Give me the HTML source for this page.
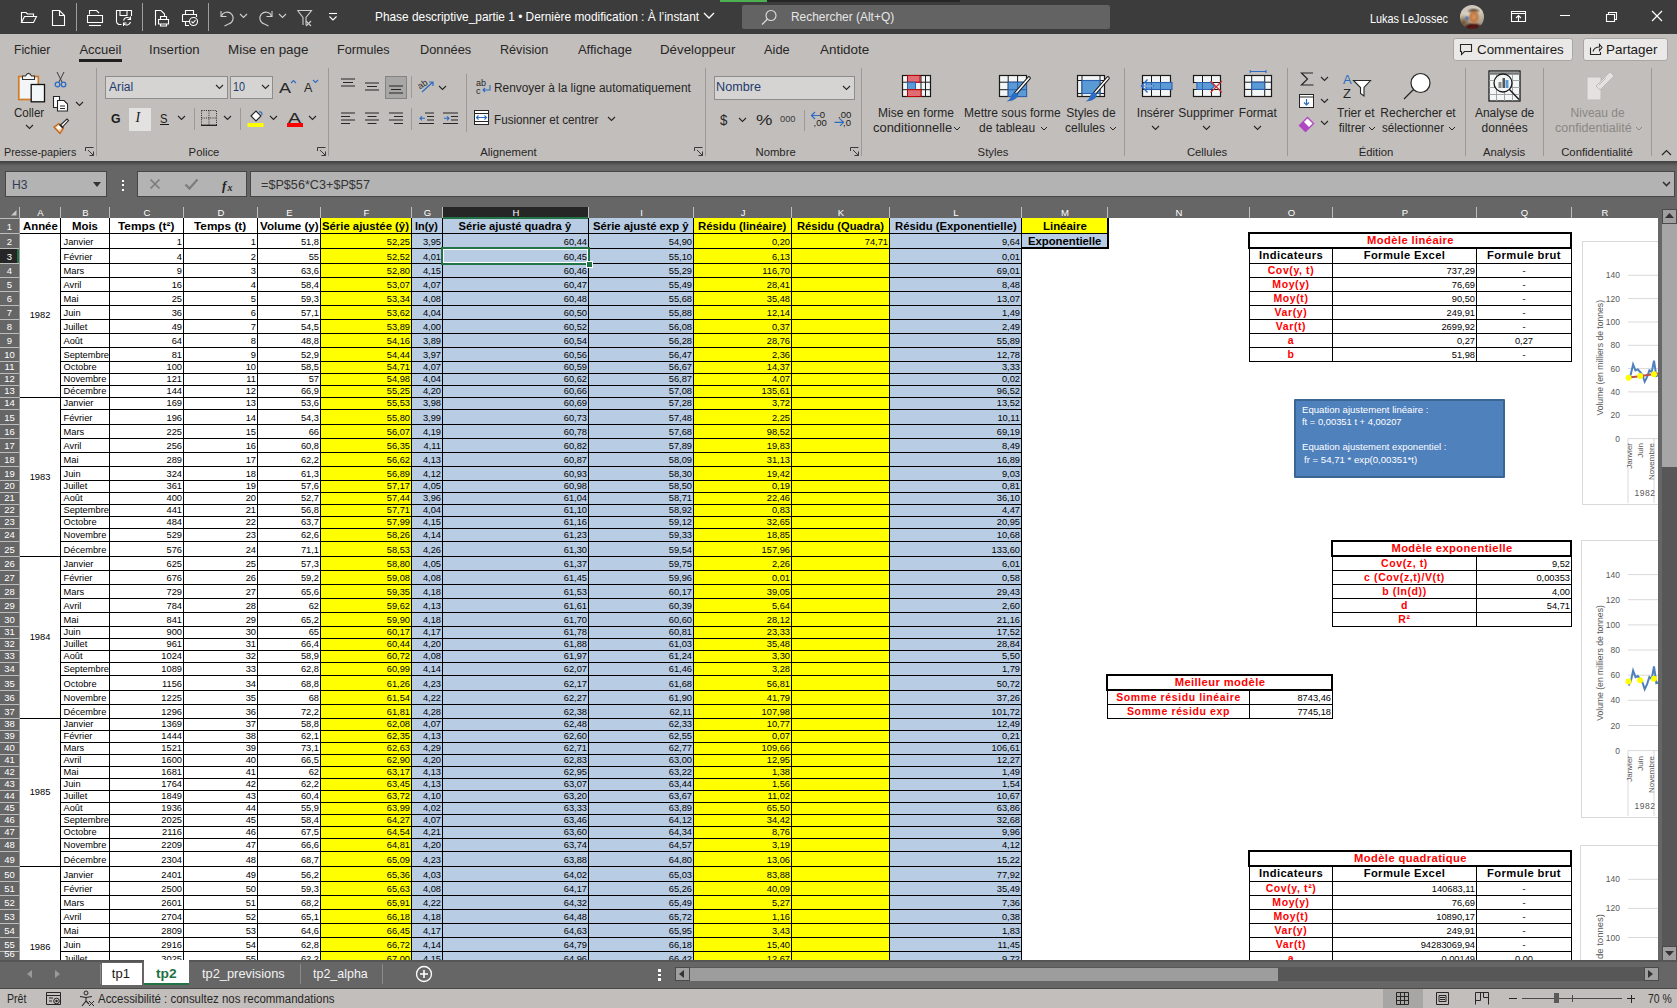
<!DOCTYPE html><html><head><meta charset="utf-8"><style>*{margin:0;padding:0}
body{width:1677px;height:1008px;overflow:hidden;position:relative;background:#c2bebb;font-family:"Liberation Sans",sans-serif}
body div,body svg{position:absolute}
.t{white-space:nowrap}
.c{height:12px;line-height:12px;font-size:9.3px;white-space:nowrap;color:#000}
.c.r{text-align:right;box-sizing:border-box;padding-right:1px}
.c.l{text-align:left;box-sizing:border-box;padding-left:2.5px}
.h{height:15px;line-height:15px;font-size:11.2px;font-weight:bold;text-align:center;white-space:nowrap;letter-spacing:0.4px}
.ch{top:207px;height:11px;line-height:12px;font-size:9.5px;color:#fff;text-align:center}
.rh{left:0;width:19px;height:12px;line-height:12px;font-size:9.5px;color:#fff;text-align:center}
</style></head><body>
<div style="left:0px;top:0px;width:1677px;height:34px;background:#3c3c3c;"></div>
<div style="left:720px;top:0px;width:47px;height:2px;background:#4caf50;"></div>
<div style="left:767px;top:0px;width:193px;height:2px;background:#262626;"></div>
<svg style="left:20px;top:9px;" width="18" height="16" viewBox="0 0 18 16"><path fill="none" stroke="#fff" stroke-width="1.1" d="M1.5 13.5V3.5H6L7.5 5H13.5V7.5"/><path fill="none" stroke="#fff" stroke-width="1.1" d="M1.5 13.5L4.5 7.5H16.5L13.5 13.5Z"/></svg>
<svg style="left:51px;top:9px;" width="15" height="18" viewBox="0 0 15 18"><path fill="none" stroke="#fff" stroke-width="1.1" d="M1.5 1.5H8.5L13.5 6.5V16.5H1.5Z"/><path fill="none" stroke="#fff" stroke-width="1.1" d="M8.5 1.5V6.5H13.5"/></svg>
<div style="left:76px;top:3px;width:1px;height:28px;background:#9e9e9e;"></div>
<svg style="left:86px;top:9px;" width="18" height="18" viewBox="0 0 18 18"><path fill="none" stroke="#fff" stroke-width="1.1" d="M3.5 5.5V1.5H10.5L13 4"/><path fill="none" stroke="#fff" stroke-width="1.1" d="M1.5 6.5H16.5V13.5H1.5Z"/><path fill="none" stroke="#fff" stroke-width="1.1" d="M3 16.5H15"/></svg>
<svg style="left:115px;top:9px;" width="18" height="18" viewBox="0 0 18 18"><path fill="none" stroke="#fff" stroke-width="1.1" d="M1.5 13.5V1.5H16.5V7"/><path fill="none" stroke="#fff" stroke-width="1.1" d="M1.5 13.5L3.5 15.5H6.5"/><path fill="none" stroke="#fff" stroke-width="1.1" d="M5 1.5V6.5H12V1.5"/><path fill="none" stroke="#fff" stroke-width="1.1" d="M8.5 11.5A4 4 0 0 1 15.5 10M15.5 13A4 4 0 0 1 8.5 14.5M15.5 7.5V10.5H12.5M8.5 17V14H11.5"/></svg>
<div style="left:142px;top:3px;width:1px;height:28px;background:#9e9e9e;"></div>
<svg style="left:154px;top:9px;" width="16" height="18" viewBox="0 0 16 18"><path fill="none" stroke="#fff" stroke-width="1.1" d="M1.5 16.5V1.5H7L10.5 5V7"/><path fill="none" stroke="#fff" stroke-width="1.1" d="M4.5 10.5H14.5V15H4.5Z"/><path fill="none" stroke="#fff" stroke-width="1.1" d="M6.5 10.5V7.5H12.5V10.5M6.5 15V17H12.5V15"/></svg>
<svg style="left:181px;top:9px;" width="18" height="18" viewBox="0 0 18 18"><path fill="none" stroke="#fff" stroke-width="1.1" d="M4.5 5.5V1.5H12.5V5.5"/><path fill="none" stroke="#fff" stroke-width="1.1" d="M1.5 5.5H15.5V8M1.5 5.5V12.5H8"/><path fill="none" stroke="#fff" stroke-width="1.1" d="M4.5 12.5V16.5H8"/><circle fill="none" stroke="#fff" stroke-width="1.1" cx="12.5" cy="12.5" r="4"/><path fill="none" stroke="#fff" stroke-width="1.1" d="M10.5 12.5L12 14L14.5 11"/></svg>
<div style="left:208px;top:3px;width:1px;height:28px;background:#9e9e9e;"></div>
<svg style="left:219px;top:9px;" width="16" height="18" viewBox="0 0 16 18"><path fill="none" stroke="#cfcfcf" stroke-width="1.1" d="M2 2V7.5H7.5"/><path fill="none" stroke="#cfcfcf" stroke-width="1.1" d="M2.5 7A6 6 0 1 1 9.5 15L5.5 17"/></svg>
<svg style="left:239px;top:13px;" width="9" height="6" viewBox="0 0 9 6"><path fill="none" stroke="#cfcfcf" stroke-width="1.1" d="M1 1L4.5 4.5L8 1"/></svg>
<svg style="left:258px;top:9px;" width="16" height="18" viewBox="0 0 16 18"><path fill="none" stroke="#cfcfcf" stroke-width="1.1" d="M14 2V7.5H8.5"/><path fill="none" stroke="#cfcfcf" stroke-width="1.1" d="M13.5 7A6 6 0 1 0 6.5 15L10.5 17"/></svg>
<svg style="left:278px;top:13px;" width="9" height="6" viewBox="0 0 9 6"><path fill="none" stroke="#cfcfcf" stroke-width="1.1" d="M1 1L4.5 4.5L8 1"/></svg>
<svg style="left:296px;top:9px;" width="18" height="18" viewBox="0 0 18 18"><path fill="none" stroke="#cfcfcf" stroke-width="1.1" d="M1.5 1.5H15.5L10 8.5V16"/><path fill="none" stroke="#cfcfcf" stroke-width="1.1" d="M1.5 1.5L7 8.5V16"/><path fill="none" stroke="#cfcfcf" stroke-width="1.1" d="M10 12L15 17M15 12L10 17"/></svg>
<svg style="left:328px;top:12px;" width="10" height="10" viewBox="0 0 10 10"><path fill="none" stroke="#fff" stroke-width="1.1" d="M1 1.5H9"/><path fill="none" stroke="#fff" stroke-width="1.1" d="M1.5 4.5L5 8L8.5 4.5"/></svg>
<div class="t" style="left:375.1px;top:10.3px;font-size:13px;line-height:13px;color:#ffffff;transform:scaleX(0.913);transform-origin:0 0;">Phase descriptive_partie 1 • Dernière modification : À l’instant</div>
<svg style="left:703px;top:12px;" width="12" height="8" viewBox="0 0 12 8"><path fill="none" stroke="#fff" stroke-width="1.3" d="M1 1L6 6L11 1"/></svg>
<div style="left:742px;top:5px;width:368px;height:24px;background:#636363;border-radius:2px"></div>
<svg style="left:760px;top:9px;" width="18" height="17" viewBox="0 0 18 17"><circle cx="11" cy="6.5" r="5" fill="none" stroke="#e0e0e0" stroke-width="1.1"/><path d="M7.5 10L2 15.5" stroke="#e0e0e0" stroke-width="1.2"/></svg>
<div class="t" style="left:791.0px;top:10.9px;font-size:12.5px;line-height:12.5px;color:#e6e6e6;transform:scaleX(0.955);transform-origin:0 0;">Rechercher (Alt+Q)</div>
<div class="t" style="left:1370.2px;top:11.5px;font-size:13px;line-height:13px;color:#ffffff;transform:scaleX(0.836);transform-origin:0 0;">Lukas LeJossec</div>
<div style="left:1460px;top:5px;width:24px;height:24px;border-radius:50%;overflow:hidden;background:radial-gradient(ellipse 6px 8px at 58% 50%,#d99560 0,#c07a45 55%,rgba(176,106,58,0) 100%),radial-gradient(ellipse 7px 3px at 57% 24%,#3a2a1a 0,rgba(58,42,26,0) 100%),radial-gradient(ellipse 11px 7px at 55% 100%,#5e1c18 0,#4a1614 60%,rgba(74,22,20,0) 100%),radial-gradient(circle 3px at 30% 55%,#3a70c0 0,rgba(58,112,192,0) 100%),radial-gradient(ellipse 8px 9px at 15% 75%,#6a5030 0,rgba(106,80,48,0) 100%),linear-gradient(160deg,#c8c0b8 0,#d8d0c0 40%,#8a7a68 100%)"></div>
<svg style="left:1510px;top:10px;" width="17" height="13" viewBox="0 0 17 13"><path fill="none" stroke="#fff" stroke-width="1.1" d="M1.5 1.5H15.5V11.5H1.5ZM1.5 3.5H15.5M8.5 11V5.5M6 8L8.5 5.5L11 8"/></svg>
<div style="left:1560px;top:15px;width:10px;height:1.2px;background:#fff;"></div>
<svg style="left:1604px;top:10px;" width="14" height="13" viewBox="0 0 14 13"><path fill="none" stroke="#fff" stroke-width="1.1" d="M2.5 4.5H10.5V11.5H2.5ZM4.5 4.5V2.5H12.5V9.5H10.5"/></svg>
<svg style="left:1650px;top:9px;" width="14" height="14" viewBox="0 0 14 14"><path fill="none" stroke="#fff" stroke-width="1.2" d="M2 2L12 12M12 2L2 12"/></svg>
<div style="left:0px;top:34px;width:1677px;height:127px;background:#c2bebb;"></div>
<div class="t" style="left:13.5px;top:43.3px;font-size:13px;line-height:13px;color:#262626;transform:scaleX(0.933);transform-origin:0 0;">Fichier</div>
<div class="t" style="left:79.4px;top:43.3px;font-size:13px;line-height:13px;color:#262626;">Accueil</div>
<div class="t" style="left:149.3px;top:43.3px;font-size:13px;line-height:13px;color:#262626;transform:scaleX(1.016);transform-origin:0 0;">Insertion</div>
<div class="t" style="left:228.3px;top:43.3px;font-size:13px;line-height:13px;color:#262626;transform:scaleX(1.031);transform-origin:0 0;">Mise en page</div>
<div class="t" style="left:337.2px;top:43.3px;font-size:13px;line-height:13px;color:#262626;transform:scaleX(0.971);transform-origin:0 0;">Formules</div>
<div class="t" style="left:419.7px;top:43.3px;font-size:13px;line-height:13px;color:#262626;transform:scaleX(0.984);transform-origin:0 0;">Données</div>
<div class="t" style="left:500.3px;top:43.3px;font-size:13px;line-height:13px;color:#262626;transform:scaleX(0.969);transform-origin:0 0;">Révision</div>
<div class="t" style="left:577.9px;top:43.3px;font-size:13px;line-height:13px;color:#262626;">Affichage</div>
<div class="t" style="left:659.8px;top:43.3px;font-size:13px;line-height:13px;color:#262626;transform:scaleX(1.023);transform-origin:0 0;">Développeur</div>
<div class="t" style="left:763.6px;top:43.3px;font-size:13px;line-height:13px;color:#262626;transform:scaleX(0.985);transform-origin:0 0;">Aide</div>
<div class="t" style="left:819.8px;top:43.3px;font-size:13px;line-height:13px;color:#262626;transform:scaleX(1.032);transform-origin:0 0;">Antidote</div>
<div style="left:79px;top:59px;width:43px;height:3px;background:#1f1f1f;"></div>
<div style="left:1453px;top:38px;width:118px;height:21px;background:#ebe9e7;border:1px solid #a9a7a5;border-radius:3px"></div>
<svg style="left:1459px;top:43px;" width="14" height="13" viewBox="0 0 14 13"><path fill="none" stroke="#262626" stroke-width="1.1" d="M1.5 1.5H12.5V8.5H5.5L2.5 11.5V8.5H1.5Z"/></svg>
<div class="t" style="left:1476.5px;top:43.0px;font-size:13px;line-height:13px;color:#1a1a1a;transform:scaleX(1.026);transform-origin:0 0;">Commentaires</div>
<div style="left:1583px;top:38px;width:83px;height:21px;background:#ebe9e7;border:1px solid #a9a7a5;border-radius:3px"></div>
<svg style="left:1589px;top:42px;" width="14" height="14" viewBox="0 0 14 14"><path fill="none" stroke="#262626" stroke-width="1.1" d="M1.5 5.5V12.5H11.5V10M4 9.5C5 6 8 5 10.5 5V2.5L13 5.5L10.5 8.5V6.5"/></svg>
<div class="t" style="left:1605.5px;top:43.0px;font-size:13px;line-height:13px;color:#1a1a1a;transform:scaleX(1.032);transform-origin:0 0;">Partager</div>
<div style="left:96px;top:68px;width:1px;height:88px;background:#9b9896;"></div>
<div style="left:328px;top:68px;width:1px;height:88px;background:#9b9896;"></div>
<div style="left:705px;top:68px;width:1px;height:88px;background:#9b9896;"></div>
<div style="left:861px;top:68px;width:1px;height:88px;background:#9b9896;"></div>
<div style="left:1124px;top:68px;width:1px;height:88px;background:#9b9896;"></div>
<div style="left:1287px;top:68px;width:1px;height:88px;background:#9b9896;"></div>
<div style="left:1465px;top:68px;width:1px;height:88px;background:#9b9896;"></div>
<div style="left:1543px;top:68px;width:1px;height:88px;background:#9b9896;"></div>
<div style="left:1651px;top:68px;width:1px;height:88px;background:#9b9896;"></div>
<div class="t" style="left:3.6px;top:146.6px;font-size:11.3px;line-height:11.3px;color:#262626;transform:scaleX(0.951);transform-origin:0 0;">Presse-papiers</div>
<div class="t" style="left:188.6px;top:146.6px;font-size:11.3px;line-height:11.3px;color:#262626;">Police</div>
<div class="t" style="left:480.2px;top:146.6px;font-size:11.3px;line-height:11.3px;color:#262626;">Alignement</div>
<div class="t" style="left:755.5px;top:146.6px;font-size:11.3px;line-height:11.3px;color:#262626;">Nombre</div>
<div class="t" style="left:977.6px;top:146.6px;font-size:11.3px;line-height:11.3px;color:#262626;">Styles</div>
<div class="t" style="left:1186.9px;top:146.6px;font-size:11.3px;line-height:11.3px;color:#262626;">Cellules</div>
<div class="t" style="left:1358.7px;top:146.6px;font-size:11.3px;line-height:11.3px;color:#262626;">Édition</div>
<div class="t" style="left:1483.0px;top:146.6px;font-size:11.3px;line-height:11.3px;color:#262626;">Analysis</div>
<div class="t" style="left:1561.2px;top:146.6px;font-size:11.3px;line-height:11.3px;color:#262626;">Confidentialité</div>
<svg style="left:85px;top:147px;" width="9" height="9" viewBox="0 0 9 9"><path fill="none" stroke="#3b3b3b" stroke-width="1" d="M0.5 4V0.5H8.5M8.5 8.5L3 3M8.5 4.5V8.5H4.5"/></svg>
<svg style="left:317px;top:147px;" width="9" height="9" viewBox="0 0 9 9"><path fill="none" stroke="#3b3b3b" stroke-width="1" d="M0.5 4V0.5H8.5M8.5 8.5L3 3M8.5 4.5V8.5H4.5"/></svg>
<svg style="left:694px;top:147px;" width="9" height="9" viewBox="0 0 9 9"><path fill="none" stroke="#3b3b3b" stroke-width="1" d="M0.5 4V0.5H8.5M8.5 8.5L3 3M8.5 4.5V8.5H4.5"/></svg>
<svg style="left:850px;top:147px;" width="9" height="9" viewBox="0 0 9 9"><path fill="none" stroke="#3b3b3b" stroke-width="1" d="M0.5 4V0.5H8.5M8.5 8.5L3 3M8.5 4.5V8.5H4.5"/></svg>
<svg style="left:1661px;top:149px;" width="11" height="7" viewBox="0 0 11 7"><path fill="none" stroke="#262626" stroke-width="1.2" d="M1 6L5.5 1.5L10 6"/></svg>
<svg style="left:16px;top:70px;" width="31" height="33" viewBox="0 0 31 33"><rect x="2.8" y="6.5" width="19.5" height="23" fill="#f3f6f6" stroke="#d07a2a" stroke-width="1.7"/><path d="M6.5 9.5V6H9.5Q12.5 0.8 15.5 6H18.5V9.5Z" fill="#f3f6f6" stroke="#333" stroke-width="1.1"/><rect x="15.2" y="14.5" width="13.3" height="17.3" fill="#f3f6f6" stroke="#111" stroke-width="1.3"/></svg>
<div class="t" style="left:13.6px;top:106.6px;font-size:12px;line-height:12px;color:#262626;transform:scaleX(0.963);transform-origin:0 0;">Coller</div>
<svg style="left:25px;top:124px;" width="9" height="6" viewBox="0 0 9 6"><path fill="none" stroke="#262626" stroke-width="1.1" d="M1 1L4.5 4.5L8 1"/></svg>
<svg style="left:54px;top:71px;" width="13" height="17" viewBox="0 0 13 17"><path fill="none" stroke="#3b3b3b" stroke-width="1" d="M3 1L8 11M10 1L5 11"/><circle cx="3.5" cy="13.5" r="2.3" fill="none" stroke="#2b6cc4" stroke-width="1.3"/><circle cx="9.5" cy="13.5" r="2.3" fill="none" stroke="#2b6cc4" stroke-width="1.3"/></svg>
<svg style="left:52px;top:95px;" width="18" height="17" viewBox="0 0 18 17"><path fill="#fff" stroke="#262626" stroke-width="1.1" d="M1.5 1.5H7.5V12.5H1.5Z"/><path fill="#fff" stroke="#262626" stroke-width="1.1" d="M5.5 5.5H12L15.5 9V16H5.5Z"/><path stroke="#262626" d="M8 11H13M8 13.5H13"/></svg>
<svg style="left:75px;top:101px;" width="9" height="6" viewBox="0 0 9 6"><path fill="none" stroke="#262626" stroke-width="1.1" d="M1 1L4.5 4.5L8 1"/></svg>
<svg style="left:53px;top:118px;" width="17" height="17" viewBox="0 0 17 17"><path d="M1 9L6 5.5L10.5 10L7 15.5Z" fill="#f0c896" stroke="#c4641b" stroke-width="1.3"/><path d="M3 9.5L6.5 7L9 9.5L5.5 12Z" fill="#fff"/><path d="M7.5 7L9.5 9L15.5 2.5L14 1Z" fill="#fff" stroke="#262626" stroke-width="1.1"/><path d="M6.5 6.5L10 10" stroke="#262626" stroke-width="1.5"/></svg>
<div style="left:105px;top:76px;width:121px;height:21px;background:#d6d4d2;border:1px solid #8f8d8b"></div>
<div class="t" style="left:108.5px;top:81.4px;font-size:12.5px;line-height:12.5px;color:#1e3a6e;transform:scaleX(0.970);transform-origin:0 0;">Arial</div>
<svg style="left:215px;top:84px;" width="9" height="6" viewBox="0 0 9 6"><path fill="none" stroke="#262626" stroke-width="1.1" d="M1 1L4.5 4.5L8 1"/></svg>
<div style="left:230px;top:76px;width:41px;height:21px;background:#d6d4d2;border:1px solid #8f8d8b"></div>
<div class="t" style="left:233.0px;top:81.4px;font-size:12.5px;line-height:12.5px;color:#1e3a6e;transform:scaleX(0.860);transform-origin:0 0;">10</div>
<svg style="left:261px;top:84px;" width="9" height="6" viewBox="0 0 9 6"><path fill="none" stroke="#262626" stroke-width="1.1" d="M1 1L4.5 4.5L8 1"/></svg>
<div class="t" style="left:279.0px;top:80.3px;font-size:15px;line-height:15px;color:#262626;transform:scaleX(1.200);transform-origin:0 0;">A</div>
<svg style="left:290px;top:79px;" width="7" height="5" viewBox="0 0 7 5"><path fill="none" stroke="#2b6cc4" stroke-width="1.1" d="M1 4L3.5 1.5L6 4"/></svg>
<div class="t" style="left:304.0px;top:82.4px;font-size:12.5px;line-height:12.5px;color:#262626;">A</div>
<svg style="left:312px;top:79px;" width="7" height="5" viewBox="0 0 7 5"><path fill="none" stroke="#2b6cc4" stroke-width="1.1" d="M1 1L3.5 3.5L6 1"/></svg>
<div class="t" style="left:111.0px;top:111.5px;font-size:13px;line-height:13px;color:#1a1a1a;font-weight:bold;transform:scaleX(0.940);transform-origin:0 0;">G</div>
<div style="left:129px;top:108px;width:22px;height:23px;background:#e4e2e0;"></div>
<div class="t" style="left:135.5px;top:110.6px;font-size:14px;line-height:14px;color:#1a1a1a;font-style:italic;font-family:'Liberation Serif'">I</div>
<div class="t" style="left:160.4px;top:111.5px;font-size:13px;line-height:13px;color:#1a1a1a;transform:scaleX(0.867);transform-origin:0 0;">S</div>
<div style="left:160px;top:124px;width:9px;height:1.2px;background:#1a1a1a;"></div>
<svg style="left:177px;top:115px;" width="9" height="6" viewBox="0 0 9 6"><path fill="none" stroke="#262626" stroke-width="1.1" d="M1 1L4.5 4.5L8 1"/></svg>
<div style="left:194px;top:108px;width:1px;height:22px;background:#9b9896;"></div>
<svg style="left:201px;top:110px;" width="17" height="16" viewBox="0 0 17 16"><path fill="none" stroke="#262626" stroke-width="1" stroke-dasharray="1 1.2" d="M0.5 0.5H15.5V15.5M0.5 0.5V15.5M8 0.5V15.5M0.5 8H15.5"/><path stroke="#1a1a1a" stroke-width="1.3" d="M0 15.3H16"/></svg>
<svg style="left:223px;top:115px;" width="9" height="6" viewBox="0 0 9 6"><path fill="none" stroke="#262626" stroke-width="1.1" d="M1 1L4.5 4.5L8 1"/></svg>
<div style="left:240px;top:108px;width:1px;height:22px;background:#9b9896;"></div>
<svg style="left:247px;top:108px;" width="18" height="21" viewBox="0 0 18 21"><path d="M4 8L9 3L14 8L9 13Z" fill="#fff" stroke="#262626" stroke-width="1.1"/><path d="M12 4Q15 3 15 7" fill="none" stroke="#2b6cc4" stroke-width="1.2"/><rect x="0.5" y="15" width="16" height="4" fill="#ffff00"/></svg>
<svg style="left:269px;top:115px;" width="9" height="6" viewBox="0 0 9 6"><path fill="none" stroke="#262626" stroke-width="1.1" d="M1 1L4.5 4.5L8 1"/></svg>
<div class="t" style="left:288.0px;top:111.1px;font-size:14px;line-height:14px;color:#262626;transform:scaleX(1.400);transform-origin:0 0;">A</div>
<div style="left:287px;top:123px;width:16px;height:4px;background:#ff0000;"></div>
<svg style="left:308px;top:115px;" width="9" height="6" viewBox="0 0 9 6"><path fill="none" stroke="#262626" stroke-width="1.1" d="M1 1L4.5 4.5L8 1"/></svg>
<svg style="left:341px;top:78px;" width="15" height="12" viewBox="0 0 15 12"><path stroke="#262626" stroke-width="1.1" d="M0 1H14M2 4.5H12M0 8H14"/></svg>
<svg style="left:365px;top:82px;" width="15" height="11" viewBox="0 0 15 11"><path stroke="#262626" stroke-width="1.1" d="M0 1H14M2 4.5H12M0 8H14"/></svg>
<div style="left:385px;top:76px;width:20px;height:21px;background:#a9a7a5;border:1px solid #858381"></div>
<svg style="left:389px;top:85px;" width="15" height="11" viewBox="0 0 15 11"><path stroke="#262626" stroke-width="1.1" d="M0 1H14M2 4.5H12M0 8H14"/></svg>
<div style="left:411px;top:76px;width:1px;height:22px;background:#9b9896;"></div>
<svg style="left:418px;top:77px;" width="18" height="18" viewBox="0 0 18 18"><text x="0" y="10" font-size="9" font-family="Liberation Sans" fill="#262626" transform="rotate(-35 5 8)">ab</text><path d="M4 15L15 5M11 5H15V9" fill="none" stroke="#2b6cc4" stroke-width="1.2"/></svg>
<svg style="left:438px;top:85px;" width="9" height="6" viewBox="0 0 9 6"><path fill="none" stroke="#262626" stroke-width="1.1" d="M1 1L4.5 4.5L8 1"/></svg>
<div style="left:466px;top:74px;width:1px;height:58px;background:#9b9896;"></div>
<svg style="left:476px;top:78px;" width="16" height="18" viewBox="0 0 16 18"><text x="0" y="8" font-size="9" font-family="Liberation Sans" fill="#262626">ab</text><text x="0" y="16" font-size="9" font-family="Liberation Sans" fill="#262626">c</text><path d="M14 7V12H7M9 10L7 12L9 14" fill="none" stroke="#2b6cc4" stroke-width="1.1"/></svg>
<div class="t" style="left:493.5px;top:81.8px;font-size:12px;line-height:12px;color:#262626;transform:scaleX(0.990);transform-origin:0 0;">Renvoyer à la ligne automatiquement</div>
<svg style="left:341px;top:112px;" width="15" height="13" viewBox="0 0 15 13"><path stroke="#262626" stroke-width="1.1" d="M0 1H14M0 4.5H9M0 8H14M0 11.5H9"/></svg>
<svg style="left:365px;top:112px;" width="15" height="13" viewBox="0 0 15 13"><path stroke="#262626" stroke-width="1.1" d="M0 1H14M2.5 4.5H11.5M0 8H14M2.5 11.5H11.5"/></svg>
<svg style="left:389px;top:112px;" width="15" height="13" viewBox="0 0 15 13"><path stroke="#262626" stroke-width="1.1" d="M0 1H14M5 4.5H14M0 8H14M5 11.5H14"/></svg>
<div style="left:411px;top:108px;width:1px;height:22px;background:#9b9896;"></div>
<svg style="left:419px;top:112px;" width="16" height="13" viewBox="0 0 16 13"><path stroke="#262626" stroke-width="1.1" d="M6 1H15M8 4.5H15M8 8H15M0 11.5H15"/><path d="M6 6.3H1M3 4.3L1 6.3L3 8.3" fill="none" stroke="#2b6cc4" stroke-width="1.1"/></svg>
<svg style="left:443px;top:112px;" width="16" height="13" viewBox="0 0 16 13"><path stroke="#262626" stroke-width="1.1" d="M0 1H15M8 4.5H15M8 8H15M0 11.5H15"/><path d="M1 6.3H6M4 4.3L6 6.3L4 8.3" fill="none" stroke="#2b6cc4" stroke-width="1.1"/></svg>
<svg style="left:474px;top:110px;" width="16" height="16" viewBox="0 0 16 16"><rect x="0.5" y="0.5" width="14" height="14" fill="#fff" stroke="#262626"/><path d="M0.5 3.5H14.5M0.5 11.5H14.5" stroke="#262626"/><path d="M2.5 7.5H12.5M4.5 5.5L2.5 7.5L4.5 9.5M10.5 5.5L12.5 7.5L10.5 9.5" fill="none" stroke="#2b6cc4" stroke-width="1.1"/></svg>
<div class="t" style="left:493.5px;top:113.8px;font-size:12px;line-height:12px;color:#262626;transform:scaleX(0.973);transform-origin:0 0;">Fusionner et centrer</div>
<svg style="left:607px;top:116px;" width="9" height="6" viewBox="0 0 9 6"><path fill="none" stroke="#262626" stroke-width="1.1" d="M1 1L4.5 4.5L8 1"/></svg>
<div style="left:714px;top:76px;width:139px;height:22px;background:#d6d4d2;border:1px solid #8f8d8b"></div>
<div class="t" style="left:716.0px;top:81.4px;font-size:12.5px;line-height:12.5px;color:#1e3a6e;transform:scaleX(1.011);transform-origin:0 0;">Nombre</div>
<svg style="left:842px;top:85px;" width="9" height="6" viewBox="0 0 9 6"><path fill="none" stroke="#262626" stroke-width="1.1" d="M1 1L4.5 4.5L8 1"/></svg>
<div class="t" style="left:720.0px;top:112.3px;font-size:15px;line-height:15px;color:#262626;transform:scaleX(0.889);transform-origin:0 0;">$</div>
<svg style="left:738px;top:117px;" width="9" height="6" viewBox="0 0 9 6"><path fill="none" stroke="#262626" stroke-width="1.1" d="M1 1L4.5 4.5L8 1"/></svg>
<div class="t" style="left:756.0px;top:112.3px;font-size:15px;line-height:15px;color:#262626;transform:scaleX(1.231);transform-origin:0 0;">%</div>
<div class="t" style="left:780.0px;top:115.4px;font-size:9px;line-height:9px;color:#3b3b3b;transform:scaleX(1.033);transform-origin:0 0;">000</div>
<div style="left:804px;top:110px;width:1px;height:21px;background:#9b9896;"></div>
<svg style="left:810px;top:109px;" width="42" height="20" viewBox="0 0 42 20"><path d="M1.5 6.5H10M5 3L1.5 6.5L5 10" fill="none" stroke="#2b6cc4" stroke-width="1.2"/><text x="9.8" y="8.6" font-size="9.5" font-family="Liberation Sans" fill="#1a1a1a">0</text><text x="3.5" y="17" font-size="9.5" font-family="Liberation Sans" fill="#1a1a1a">,00</text><text x="28" y="8.6" font-size="9.5" font-family="Liberation Sans" fill="#1a1a1a">,00</text><path d="M24.5 13.3H33.5M30 9.8L33.5 13.3L30 16.8" fill="none" stroke="#2b6cc4" stroke-width="1.2"/><text x="33" y="17" font-size="9.5" font-family="Liberation Sans" fill="#1a1a1a">,0</text></svg>
<svg style="left:901px;top:74px;" width="31" height="24" viewBox="0 0 31 24"><rect x="1.5" y="1.5" width="28" height="21" fill="#f3f6f6" stroke="#1a1a1a" stroke-width="1.2"/><path d="M1.5 8.2H29.5M1.5 15.7H29.5M20 1.5V22.5M24.5 1.5V22.5" stroke="#1a1a1a" stroke-width="1"/><rect x="6.5" y="1.5" width="12.5" height="6.7" fill="#e06c75" stroke="#c00000" stroke-width="1"/><rect x="6.5" y="8.2" width="8" height="7.5" fill="#5b9bd5" stroke="#2b5fb0" stroke-width="1"/><rect x="6.5" y="15.7" width="13.5" height="6.8" fill="#e06c75" stroke="#c00000" stroke-width="1"/></svg>
<div class="t" style="left:878.0px;top:106.8px;font-size:12px;line-height:12px;color:#262626;">Mise en forme</div>
<div class="t" style="left:872.5px;top:122.3px;font-size:12px;line-height:12px;color:#262626;transform:scaleX(1.078);transform-origin:0 0;">conditionnelle</div>
<svg style="left:953px;top:126px;" width="8" height="5" viewBox="0 0 8 5"><path fill="none" stroke="#262626" stroke-width="1" d="M1 1L4 4L7 1"/></svg>
<svg style="left:998px;top:73px;" width="36" height="30" viewBox="0 0 36 30"><rect x="1.5" y="2.5" width="27" height="21" fill="#f3f6f6" stroke="#1a1a1a" stroke-width="1.2"/><path d="M1.5 9.2H28.5M1.5 16.7H28.5M10.2 2.5V23.5M19.6 2.5V23.5" stroke="#1a1a1a" stroke-width="1"/><rect x="10.2" y="9.2" width="18.3" height="14.3" fill="#5b9bd5" stroke="#2b5fb0" stroke-width="1"/><path d="M19.6 9.2V23.5M10.2 16.7H28.5" stroke="#2b5fb0"/><path d="M31 5L17.5 20.5" stroke="#1a1a1a" stroke-width="3.6" stroke-linecap="round"/><path d="M31 5L17.5 20.5" stroke="#fff" stroke-width="1.6" stroke-linecap="round"/><path d="M18.5 19.5Q21 22 18.5 25Q15.5 28 8.5 28.5Q12.5 26 13 23Q14 19.5 18.5 19.5Z" fill="#2b6cc4"/></svg>
<div class="t" style="left:964.0px;top:106.8px;font-size:12px;line-height:12px;color:#262626;">Mettre sous forme</div>
<div class="t" style="left:979.0px;top:122.3px;font-size:12px;line-height:12px;color:#262626;">de tableau</div>
<svg style="left:1040px;top:126px;" width="8" height="5" viewBox="0 0 8 5"><path fill="none" stroke="#262626" stroke-width="1" d="M1 1L4 4L7 1"/></svg>
<svg style="left:1076px;top:73px;" width="36" height="30" viewBox="0 0 36 30"><rect x="1.5" y="2.5" width="27" height="21" fill="#f3f6f6" stroke="#1a1a1a" stroke-width="1.2"/><path d="M1.5 7.5H28.5M1.5 20.5H28.5M6 2.5V23.5M24 2.5V23.5" stroke="#1a1a1a" stroke-width="1"/><rect x="6" y="7.5" width="18" height="13" fill="#5b9bd5" stroke="#2b5fb0" stroke-width="1.1"/><g transform="translate(1,0)"><path d="M31 5L17.5 20.5" stroke="#1a1a1a" stroke-width="3.6" stroke-linecap="round"/><path d="M31 5L17.5 20.5" stroke="#fff" stroke-width="1.6" stroke-linecap="round"/><path d="M18.5 19.5Q21 22 18.5 25Q15.5 28 8.5 28.5Q12.5 26 13 23Q14 19.5 18.5 19.5Z" fill="#2b6cc4"/></g></svg>
<div class="t" style="left:1066.3px;top:106.8px;font-size:12px;line-height:12px;color:#262626;">Styles de</div>
<div class="t" style="left:1065.0px;top:122.3px;font-size:12px;line-height:12px;color:#262626;">cellules</div>
<svg style="left:1109px;top:126px;" width="8" height="5" viewBox="0 0 8 5"><path fill="none" stroke="#262626" stroke-width="1" d="M1 1L4 4L7 1"/></svg>
<svg style="left:1140px;top:73px;" width="33" height="26" viewBox="0 0 33 26"><rect x="2.5" y="2.5" width="28" height="21" fill="#f3f6f6" stroke="#1a1a1a" stroke-width="1.2"/><path d="M11.5 2.5V23.5M20.5 2.5V23.5M2.5 9.5H30.5M2.5 16.5H30.5" stroke="#1a1a1a" stroke-width="1"/><rect x="6" y="9.5" width="26" height="7" fill="#5b9bd5" stroke="#2b5fb0" stroke-width="1.1"/><path d="M11.5 9.5V16.5M20.5 9.5V16.5" stroke="#2b5fb0"/><path d="M14 13H1.8M7.5 6.5L1.5 13L7.5 19.5" fill="none" stroke="#2b6cc4" stroke-width="1.4"/><path d="M13 13H4" stroke="#dfe9f5" stroke-width="0.8"/></svg>
<svg style="left:1191px;top:73px;" width="33" height="26" viewBox="0 0 33 26"><rect x="2.5" y="2.5" width="27" height="21" fill="#f3f6f6" stroke="#1a1a1a" stroke-width="1.2"/><path d="M11.5 2.5V23.5M20.5 2.5V23.5M2.5 9.5H29.5M2.5 16.5H29.5" stroke="#1a1a1a" stroke-width="1"/><rect x="1" y="10.2" width="4" height="5.6" fill="#c2bebb"/><path d="M5.8 9.5H20L23.5 13L20 16.5H5.8Z" fill="#5b9bd5" stroke="#2b5fb0" stroke-width="1.1"/><path d="M11.5 9.5V16.5" stroke="#2b5fb0"/><path d="M19.5 8L31 19.5M31 8L19.5 19.5" stroke="#d13438" stroke-width="1.2"/></svg>
<svg style="left:1242px;top:70px;" width="33" height="29" viewBox="0 0 33 29"><rect x="2.5" y="5.5" width="27" height="21" fill="#f3f6f6" stroke="#1a1a1a" stroke-width="1.2"/><path d="M9.7 5.5V26.5M22.7 5.5V26.5M2.5 12.2H29.5M2.5 19.4H29.5" stroke="#1a1a1a" stroke-width="1"/><rect x="9.7" y="12.2" width="13" height="7.2" fill="#5b9bd5" stroke="#2b5fb0" stroke-width="1.1"/><path d="M8.2 1.5H24M8.2 0V3M24 0V3" stroke="#2b6cc4" stroke-width="1.1"/></svg>
<div class="t" style="left:1136.8px;top:106.8px;font-size:12px;line-height:12px;color:#262626;">Insérer</div>
<svg style="left:1151px;top:125px;" width="9" height="6" viewBox="0 0 9 6"><path fill="none" stroke="#262626" stroke-width="1.1" d="M1 1L4.5 4.5L8 1"/></svg>
<div class="t" style="left:1178.3px;top:106.8px;font-size:12px;line-height:12px;color:#262626;">Supprimer</div>
<svg style="left:1202px;top:125px;" width="9" height="6" viewBox="0 0 9 6"><path fill="none" stroke="#262626" stroke-width="1.1" d="M1 1L4.5 4.5L8 1"/></svg>
<div class="t" style="left:1238.8px;top:106.8px;font-size:12px;line-height:12px;color:#262626;">Format</div>
<svg style="left:1253px;top:125px;" width="9" height="6" viewBox="0 0 9 6"><path fill="none" stroke="#262626" stroke-width="1.1" d="M1 1L4.5 4.5L8 1"/></svg>
<svg style="left:1300px;top:72px;" width="16" height="15" viewBox="0 0 16 15"><path d="M13 1H1.5L7.5 7L1.5 13H13.5" fill="none" stroke="#262626" stroke-width="1.2"/></svg>
<svg style="left:1320px;top:76px;" width="9" height="6" viewBox="0 0 9 6"><path fill="none" stroke="#262626" stroke-width="1.1" d="M1 1L4.5 4.5L8 1"/></svg>
<svg style="left:1298px;top:93px;" width="18" height="16" viewBox="0 0 18 16"><rect x="1.5" y="1.5" width="14" height="13" fill="#fff" stroke="#262626"/><path d="M1.5 4H15.5" stroke="#262626"/><path d="M8.5 6V12M6 9.5L8.5 12L11 9.5" fill="none" stroke="#2b6cc4" stroke-width="1.2"/></svg>
<svg style="left:1320px;top:98px;" width="9" height="6" viewBox="0 0 9 6"><path fill="none" stroke="#262626" stroke-width="1.1" d="M1 1L4.5 4.5L8 1"/></svg>
<svg style="left:1298px;top:115px;" width="17" height="17" viewBox="0 0 17 17"><path d="M1.5 10.5L9.5 2.5L15.5 8.5L7.5 16.5Z" fill="#fff" stroke="#b146c2" stroke-width="1.4"/><path d="M1.5 10.5L5.5 6.5L11.5 12.5L7.5 16.5Z" fill="#b146c2"/></svg>
<svg style="left:1320px;top:120px;" width="9" height="6" viewBox="0 0 9 6"><path fill="none" stroke="#262626" stroke-width="1.1" d="M1 1L4.5 4.5L8 1"/></svg>
<svg style="left:1341px;top:72px;" width="31" height="27" viewBox="0 0 31 27"><text x="2" y="12" font-size="13" font-family="Liberation Sans" fill="#2b6cc4">A</text><text x="2" y="26" font-size="13" font-family="Liberation Sans" fill="#262626">Z</text><path d="M12.5 8.5H29.5L23 15.5V24L19.5 21.5V15.5Z" fill="#fff" stroke="#262626" stroke-width="1.1"/></svg>
<div class="t" style="left:1337.0px;top:106.8px;font-size:12px;line-height:12px;color:#262626;">Trier et</div>
<div class="t" style="left:1338.7px;top:121.8px;font-size:12px;line-height:12px;color:#262626;">filtrer</div>
<svg style="left:1368px;top:126px;" width="8" height="5" viewBox="0 0 8 5"><path fill="none" stroke="#262626" stroke-width="1" d="M1 1L4 4L7 1"/></svg>
<svg style="left:1402px;top:72px;" width="32" height="28" viewBox="0 0 32 28"><circle cx="18.5" cy="11" r="9.5" fill="#fff" stroke="#262626" stroke-width="1.2"/><path d="M11.5 17.5L2 27" stroke="#262626" stroke-width="1.2"/></svg>
<div class="t" style="left:1380.3px;top:106.8px;font-size:12px;line-height:12px;color:#262626;">Rechercher et</div>
<div class="t" style="left:1382.0px;top:121.8px;font-size:12px;line-height:12px;color:#262626;transform:scaleX(0.958);transform-origin:0 0;">sélectionner</div>
<svg style="left:1448px;top:126px;" width="8" height="5" viewBox="0 0 8 5"><path fill="none" stroke="#262626" stroke-width="1" d="M1 1L4 4L7 1"/></svg>
<svg style="left:1488px;top:70px;" width="34" height="33" viewBox="0 0 34 33"><rect x="1" y="1" width="31" height="30" fill="#f3f6f6" stroke="#1a1a1a" stroke-width="1.3"/><path d="M1 3.5H32" stroke="#777" stroke-width="2.5"/><path d="M1 10.5H32M1 17.5H32M1 24.5H32M8.5 4V31M16.5 4V31M24.5 4V31" stroke="#9a9a9a" stroke-width="0.9"/><circle cx="15" cy="13" r="9" fill="#f3f6f6" stroke="#1a1a1a" stroke-width="1.3"/><rect x="10.5" y="12" width="3" height="6" fill="#8a8a8a"/><rect x="14.5" y="8" width="2.5" height="10" fill="#555"/><rect x="17.5" y="10" width="3" height="8" fill="#5b9bd5"/><path d="M21.5 19.5L31 29.5" stroke="#1a1a1a" stroke-width="1.4"/></svg>
<div class="t" style="left:1474.9px;top:106.8px;font-size:12px;line-height:12px;color:#262626;">Analyse de</div>
<div class="t" style="left:1481.6px;top:121.8px;font-size:12px;line-height:12px;color:#262626;">données</div>
<svg style="left:1586px;top:70px;" width="30" height="32" viewBox="0 0 30 32"><path d="M1 7H15V30H1Z" fill="#e4e2e0" stroke="#bdbab7"/><path d="M10 16L24 2L28 6L14 20Z" fill="#e4e2e0" stroke="#bdbab7"/><path d="M13 15L20 8" stroke="#bdbab7"/></svg>
<div class="t" style="left:1570.6px;top:106.8px;font-size:12px;line-height:12px;color:#8a8886;">Niveau de</div>
<div class="t" style="left:1555.0px;top:121.8px;font-size:12px;line-height:12px;color:#8a8886;transform:scaleX(1.045);transform-origin:0 0;">confidentialité</div>
<svg style="left:1635px;top:126px;" width="8" height="5" viewBox="0 0 8 5"><path fill="none" stroke="#8a8886" stroke-width="1" d="M1 1L4 4L7 1"/></svg>
<div style="left:0px;top:161px;width:1677px;height:46px;background:#666666;"></div>
<div style="left:0;top:161px;width:1677px;height:5px;background:linear-gradient(#3f3f3f,#666)"></div>
<div style="left:5px;top:171px;width:100px;height:24px;background:#b3b3b3;border:1px solid #464646"></div>
<div class="t" style="left:11.5px;top:179.4px;font-size:12.5px;line-height:12.5px;color:#2f3b52;transform:scaleX(0.965);transform-origin:0 0;">H3</div>
<svg style="left:93px;top:182px;" width="9" height="6" viewBox="0 0 9 6"><path d="M0 0H8L4 5Z" fill="#333"/></svg>
<div style="left:121.5px;top:179.5px;width:2px;height:2px;background:#fff;"></div>
<div style="left:121.5px;top:184px;width:2px;height:2px;background:#fff;"></div>
<div style="left:121.5px;top:188.5px;width:2px;height:2px;background:#fff;"></div>
<div style="left:137px;top:171px;width:108px;height:24px;background:#b3b3b3;border:1px solid #464646"></div>
<svg style="left:149px;top:178px;" width="12" height="12" viewBox="0 0 12 12"><path d="M1.5 1.5L10.5 10.5M10.5 1.5L1.5 10.5" stroke="#7c7c7c" stroke-width="1.7"/></svg>
<svg style="left:184px;top:178px;" width="15" height="12" viewBox="0 0 15 12"><path d="M1.5 6.5L5.5 10.5L13.5 1.5" fill="none" stroke="#7c7c7c" stroke-width="2.2"/></svg>
<div class="t" style="left:222.0px;top:179.0px;font-size:13px;line-height:13px;color:#222;font-weight:bold;font-style:italic;font-family:'Liberation Serif'">f</div>
<div class="t" style="left:227.5px;top:182.5px;font-size:10px;line-height:10px;color:#222;font-weight:bold;font-style:italic;font-family:'Liberation Serif'">x</div>
<div style="left:250px;top:171px;width:1423px;height:24px;background:#b3b3b3;border:1px solid #464646"></div>
<div class="t" style="left:261.0px;top:179.4px;font-size:12.5px;line-height:12.5px;color:#333;transform:scaleX(1.011);transform-origin:0 0;">=$P$56*C3+$P$57</div>
<svg style="left:1662px;top:181px;" width="9" height="6" viewBox="0 0 9 6"><path d="M1 1L4.5 4.5L8 1" fill="none" stroke="#333" stroke-width="1.6"/></svg>
<div style="left:19px;top:218px;width:1639px;height:742px;background:#fff;"></div>
<div style="left:321px;top:218px;width:90px;height:742px;background:#ffff00;"></div>
<div style="left:694px;top:218px;width:97px;height:742px;background:#ffff00;"></div>
<div style="left:792px;top:218px;width:97px;height:742px;background:#ffff00;"></div>
<div style="left:412px;top:218px;width:30px;height:742px;background:#b8cce4;"></div>
<div style="left:443px;top:218px;width:145px;height:742px;background:#b8cce4;"></div>
<div style="left:589px;top:218px;width:104px;height:742px;background:#b8cce4;"></div>
<div style="left:890px;top:218px;width:131px;height:742px;background:#b8cce4;"></div>
<div style="left:1022px;top:218px;width:85px;height:15px;background:#ffff00;"></div>
<div style="left:1022px;top:234px;width:85px;height:15px;background:#b8cce4;"></div>
<div style="left:20px;top:233px;width:1002px;height:1px;background:#000;"></div>
<div style="left:60px;top:248px;width:962px;height:1px;background:#000;"></div>
<div style="left:60px;top:263px;width:962px;height:1px;background:#000;"></div>
<div style="left:60px;top:277px;width:962px;height:1px;background:#000;"></div>
<div style="left:60px;top:291px;width:962px;height:1px;background:#000;"></div>
<div style="left:60px;top:305px;width:962px;height:1px;background:#000;"></div>
<div style="left:60px;top:319px;width:962px;height:1px;background:#000;"></div>
<div style="left:60px;top:333px;width:962px;height:1px;background:#000;"></div>
<div style="left:60px;top:347px;width:962px;height:1px;background:#000;"></div>
<div style="left:60px;top:361px;width:962px;height:1px;background:#000;"></div>
<div style="left:60px;top:373px;width:962px;height:1px;background:#000;"></div>
<div style="left:60px;top:385px;width:962px;height:1px;background:#000;"></div>
<div style="left:20px;top:397px;width:1002px;height:1px;background:#000;"></div>
<div style="left:60px;top:409px;width:962px;height:1px;background:#000;"></div>
<div style="left:60px;top:424px;width:962px;height:1px;background:#000;"></div>
<div style="left:60px;top:438px;width:962px;height:1px;background:#000;"></div>
<div style="left:60px;top:452px;width:962px;height:1px;background:#000;"></div>
<div style="left:60px;top:466px;width:962px;height:1px;background:#000;"></div>
<div style="left:60px;top:480px;width:962px;height:1px;background:#000;"></div>
<div style="left:60px;top:492px;width:962px;height:1px;background:#000;"></div>
<div style="left:60px;top:504px;width:962px;height:1px;background:#000;"></div>
<div style="left:60px;top:516px;width:962px;height:1px;background:#000;"></div>
<div style="left:60px;top:528px;width:962px;height:1px;background:#000;"></div>
<div style="left:60px;top:541px;width:962px;height:1px;background:#000;"></div>
<div style="left:20px;top:556px;width:1002px;height:1px;background:#000;"></div>
<div style="left:60px;top:570px;width:962px;height:1px;background:#000;"></div>
<div style="left:60px;top:584px;width:962px;height:1px;background:#000;"></div>
<div style="left:60px;top:598px;width:962px;height:1px;background:#000;"></div>
<div style="left:60px;top:612px;width:962px;height:1px;background:#000;"></div>
<div style="left:60px;top:626px;width:962px;height:1px;background:#000;"></div>
<div style="left:60px;top:638px;width:962px;height:1px;background:#000;"></div>
<div style="left:60px;top:650px;width:962px;height:1px;background:#000;"></div>
<div style="left:60px;top:662px;width:962px;height:1px;background:#000;"></div>
<div style="left:60px;top:675px;width:962px;height:1px;background:#000;"></div>
<div style="left:60px;top:690px;width:962px;height:1px;background:#000;"></div>
<div style="left:60px;top:704px;width:962px;height:1px;background:#000;"></div>
<div style="left:20px;top:718px;width:1002px;height:1px;background:#000;"></div>
<div style="left:60px;top:730px;width:962px;height:1px;background:#000;"></div>
<div style="left:60px;top:742px;width:962px;height:1px;background:#000;"></div>
<div style="left:60px;top:754px;width:962px;height:1px;background:#000;"></div>
<div style="left:60px;top:766px;width:962px;height:1px;background:#000;"></div>
<div style="left:60px;top:778px;width:962px;height:1px;background:#000;"></div>
<div style="left:60px;top:790px;width:962px;height:1px;background:#000;"></div>
<div style="left:60px;top:802px;width:962px;height:1px;background:#000;"></div>
<div style="left:60px;top:814px;width:962px;height:1px;background:#000;"></div>
<div style="left:60px;top:826px;width:962px;height:1px;background:#000;"></div>
<div style="left:60px;top:838px;width:962px;height:1px;background:#000;"></div>
<div style="left:60px;top:851px;width:962px;height:1px;background:#000;"></div>
<div style="left:20px;top:866px;width:1002px;height:1px;background:#000;"></div>
<div style="left:60px;top:881px;width:962px;height:1px;background:#000;"></div>
<div style="left:60px;top:895px;width:962px;height:1px;background:#000;"></div>
<div style="left:60px;top:909px;width:962px;height:1px;background:#000;"></div>
<div style="left:60px;top:923px;width:962px;height:1px;background:#000;"></div>
<div style="left:60px;top:937px;width:962px;height:1px;background:#000;"></div>
<div style="left:60px;top:951px;width:962px;height:1px;background:#000;"></div>
<div style="left:60px;top:218px;width:1px;height:742px;background:#000;"></div>
<div style="left:109px;top:218px;width:1px;height:742px;background:#000;"></div>
<div style="left:183px;top:218px;width:1px;height:742px;background:#000;"></div>
<div style="left:257px;top:218px;width:1px;height:742px;background:#000;"></div>
<div style="left:320px;top:218px;width:1px;height:742px;background:#000;"></div>
<div style="left:411px;top:218px;width:1px;height:742px;background:#000;"></div>
<div style="left:442px;top:218px;width:1px;height:742px;background:#000;"></div>
<div style="left:588px;top:218px;width:1px;height:742px;background:#000;"></div>
<div style="left:693px;top:218px;width:1px;height:742px;background:#000;"></div>
<div style="left:791px;top:218px;width:1px;height:742px;background:#000;"></div>
<div style="left:889px;top:218px;width:1px;height:742px;background:#000;"></div>
<div style="left:1021px;top:218px;width:1px;height:742px;background:#000;"></div>
<div style="left:1021px;top:218px;width:85px;height:29px;border:2px solid #000;border-top:0;border-left:1px solid #000"></div>
<div style="left:1022px;top:233px;width:85px;height:1px;background:#000;"></div>
<div class="t" style="left:22.8px;top:220.7px;font-size:11.2px;line-height:11.2px;color:#000;font-weight:bold;transform:scaleX(1.016);transform-origin:0 0;">Année</div>
<div class="t" style="left:72.2px;top:220.7px;font-size:11.2px;line-height:11.2px;color:#000;font-weight:bold;transform:scaleX(1.017);transform-origin:0 0;">Mois</div>
<div class="t" style="left:118.2px;top:220.7px;font-size:11.2px;line-height:11.2px;color:#000;font-weight:bold;transform:scaleX(1.058);transform-origin:0 0;">Temps (t²)</div>
<div class="t" style="left:194.2px;top:220.7px;font-size:11.2px;line-height:11.2px;color:#000;font-weight:bold;transform:scaleX(1.054);transform-origin:0 0;">Temps (t)</div>
<div class="t" style="left:259.5px;top:220.7px;font-size:11.2px;line-height:11.2px;color:#000;font-weight:bold;transform:scaleX(1.042);transform-origin:0 0;">Volume (y)</div>
<div class="t" style="left:322.4px;top:220.7px;font-size:11.2px;line-height:11.2px;color:#000;font-weight:bold;transform:scaleX(1.013);transform-origin:0 0;">Série ajustée (ŷ)</div>
<div class="t" style="left:415.4px;top:220.7px;font-size:11.2px;line-height:11.2px;color:#000;font-weight:bold;transform:scaleX(0.971);transform-origin:0 0;">ln(y)</div>
<div class="t" style="left:458.6px;top:220.7px;font-size:11.2px;line-height:11.2px;color:#000;font-weight:bold;">Série ajusté quadra ŷ</div>
<div class="t" style="left:592.9px;top:220.7px;font-size:11.2px;line-height:11.2px;color:#000;font-weight:bold;transform:scaleX(1.010);transform-origin:0 0;">Série ajusté exp ŷ</div>
<div class="t" style="left:698.2px;top:220.7px;font-size:11.2px;line-height:11.2px;color:#000;font-weight:bold;transform:scaleX(1.014);transform-origin:0 0;">Résidu (linéaire)</div>
<div class="t" style="left:796.9px;top:220.7px;font-size:11.2px;line-height:11.2px;color:#000;font-weight:bold;">Résidu (Quadra)</div>
<div class="t" style="left:894.5px;top:220.7px;font-size:11.2px;line-height:11.2px;color:#000;font-weight:bold;transform:scaleX(1.009);transform-origin:0 0;">Résidu (Exponentielle)</div>
<div class="t" style="left:1042.8px;top:220.7px;font-size:11.2px;line-height:11.2px;color:#000;font-weight:bold;transform:scaleX(1.019);transform-origin:0 0;">Linéaire</div>
<div class="t" style="left:1027.9px;top:235.9px;font-size:11.2px;line-height:11.2px;color:#000;font-weight:bold;transform:scaleX(1.009);transform-origin:0 0;">Exponentielle</div>
<div class="c l" style="left:61px;top:236px;width:48px">Janvier</div>
<div class="c r" style="left:110px;top:236px;width:73px">1</div>
<div class="c r" style="left:184px;top:236px;width:73px">1</div>
<div class="c r" style="left:258px;top:236px;width:62px">51,8</div>
<div class="c r" style="left:321px;top:236px;width:90px">52,25</div>
<div class="c r" style="left:412px;top:236px;width:30px">3,95</div>
<div class="c r" style="left:443px;top:236px;width:145px">60,44</div>
<div class="c r" style="left:589px;top:236px;width:104px">54,90</div>
<div class="c r" style="left:694px;top:236px;width:97px">0,20</div>
<div class="c r" style="left:890px;top:236px;width:131px">9,64</div>
<div class="c l" style="left:61px;top:251px;width:48px">Février</div>
<div class="c r" style="left:110px;top:251px;width:73px">4</div>
<div class="c r" style="left:184px;top:251px;width:73px">2</div>
<div class="c r" style="left:258px;top:251px;width:62px">55</div>
<div class="c r" style="left:321px;top:251px;width:90px">52,52</div>
<div class="c r" style="left:412px;top:251px;width:30px">4,01</div>
<div class="c r" style="left:443px;top:251px;width:145px">60,45</div>
<div class="c r" style="left:589px;top:251px;width:104px">55,10</div>
<div class="c r" style="left:694px;top:251px;width:97px">6,13</div>
<div class="c r" style="left:890px;top:251px;width:131px">0,01</div>
<div class="c l" style="left:61px;top:265px;width:48px">Mars</div>
<div class="c r" style="left:110px;top:265px;width:73px">9</div>
<div class="c r" style="left:184px;top:265px;width:73px">3</div>
<div class="c r" style="left:258px;top:265px;width:62px">63,6</div>
<div class="c r" style="left:321px;top:265px;width:90px">52,80</div>
<div class="c r" style="left:412px;top:265px;width:30px">4,15</div>
<div class="c r" style="left:443px;top:265px;width:145px">60,46</div>
<div class="c r" style="left:589px;top:265px;width:104px">55,29</div>
<div class="c r" style="left:694px;top:265px;width:97px">116,70</div>
<div class="c r" style="left:890px;top:265px;width:131px">69,01</div>
<div class="c l" style="left:61px;top:279px;width:48px">Avril</div>
<div class="c r" style="left:110px;top:279px;width:73px">16</div>
<div class="c r" style="left:184px;top:279px;width:73px">4</div>
<div class="c r" style="left:258px;top:279px;width:62px">58,4</div>
<div class="c r" style="left:321px;top:279px;width:90px">53,07</div>
<div class="c r" style="left:412px;top:279px;width:30px">4,07</div>
<div class="c r" style="left:443px;top:279px;width:145px">60,47</div>
<div class="c r" style="left:589px;top:279px;width:104px">55,49</div>
<div class="c r" style="left:694px;top:279px;width:97px">28,41</div>
<div class="c r" style="left:890px;top:279px;width:131px">8,48</div>
<div class="c l" style="left:61px;top:293px;width:48px">Mai</div>
<div class="c r" style="left:110px;top:293px;width:73px">25</div>
<div class="c r" style="left:184px;top:293px;width:73px">5</div>
<div class="c r" style="left:258px;top:293px;width:62px">59,3</div>
<div class="c r" style="left:321px;top:293px;width:90px">53,34</div>
<div class="c r" style="left:412px;top:293px;width:30px">4,08</div>
<div class="c r" style="left:443px;top:293px;width:145px">60,48</div>
<div class="c r" style="left:589px;top:293px;width:104px">55,68</div>
<div class="c r" style="left:694px;top:293px;width:97px">35,48</div>
<div class="c r" style="left:890px;top:293px;width:131px">13,07</div>
<div class="c l" style="left:61px;top:307px;width:48px">Juin</div>
<div class="c r" style="left:110px;top:307px;width:73px">36</div>
<div class="c r" style="left:184px;top:307px;width:73px">6</div>
<div class="c r" style="left:258px;top:307px;width:62px">57,1</div>
<div class="c r" style="left:321px;top:307px;width:90px">53,62</div>
<div class="c r" style="left:412px;top:307px;width:30px">4,04</div>
<div class="c r" style="left:443px;top:307px;width:145px">60,50</div>
<div class="c r" style="left:589px;top:307px;width:104px">55,88</div>
<div class="c r" style="left:694px;top:307px;width:97px">12,14</div>
<div class="c r" style="left:890px;top:307px;width:131px">1,49</div>
<div class="c l" style="left:61px;top:321px;width:48px">Juillet</div>
<div class="c r" style="left:110px;top:321px;width:73px">49</div>
<div class="c r" style="left:184px;top:321px;width:73px">7</div>
<div class="c r" style="left:258px;top:321px;width:62px">54,5</div>
<div class="c r" style="left:321px;top:321px;width:90px">53,89</div>
<div class="c r" style="left:412px;top:321px;width:30px">4,00</div>
<div class="c r" style="left:443px;top:321px;width:145px">60,52</div>
<div class="c r" style="left:589px;top:321px;width:104px">56,08</div>
<div class="c r" style="left:694px;top:321px;width:97px">0,37</div>
<div class="c r" style="left:890px;top:321px;width:131px">2,49</div>
<div class="c l" style="left:61px;top:335px;width:48px">Août</div>
<div class="c r" style="left:110px;top:335px;width:73px">64</div>
<div class="c r" style="left:184px;top:335px;width:73px">8</div>
<div class="c r" style="left:258px;top:335px;width:62px">48,8</div>
<div class="c r" style="left:321px;top:335px;width:90px">54,16</div>
<div class="c r" style="left:412px;top:335px;width:30px">3,89</div>
<div class="c r" style="left:443px;top:335px;width:145px">60,54</div>
<div class="c r" style="left:589px;top:335px;width:104px">56,28</div>
<div class="c r" style="left:694px;top:335px;width:97px">28,76</div>
<div class="c r" style="left:890px;top:335px;width:131px">55,89</div>
<div class="c l" style="left:61px;top:349px;width:48px">Septembre</div>
<div class="c r" style="left:110px;top:349px;width:73px">81</div>
<div class="c r" style="left:184px;top:349px;width:73px">9</div>
<div class="c r" style="left:258px;top:349px;width:62px">52,9</div>
<div class="c r" style="left:321px;top:349px;width:90px">54,44</div>
<div class="c r" style="left:412px;top:349px;width:30px">3,97</div>
<div class="c r" style="left:443px;top:349px;width:145px">60,56</div>
<div class="c r" style="left:589px;top:349px;width:104px">56,47</div>
<div class="c r" style="left:694px;top:349px;width:97px">2,36</div>
<div class="c r" style="left:890px;top:349px;width:131px">12,78</div>
<div class="c l" style="left:61px;top:361px;width:48px">Octobre</div>
<div class="c r" style="left:110px;top:361px;width:73px">100</div>
<div class="c r" style="left:184px;top:361px;width:73px">10</div>
<div class="c r" style="left:258px;top:361px;width:62px">58,5</div>
<div class="c r" style="left:321px;top:361px;width:90px">54,71</div>
<div class="c r" style="left:412px;top:361px;width:30px">4,07</div>
<div class="c r" style="left:443px;top:361px;width:145px">60,59</div>
<div class="c r" style="left:589px;top:361px;width:104px">56,67</div>
<div class="c r" style="left:694px;top:361px;width:97px">14,37</div>
<div class="c r" style="left:890px;top:361px;width:131px">3,33</div>
<div class="c l" style="left:61px;top:373px;width:48px">Novembre</div>
<div class="c r" style="left:110px;top:373px;width:73px">121</div>
<div class="c r" style="left:184px;top:373px;width:73px">11</div>
<div class="c r" style="left:258px;top:373px;width:62px">57</div>
<div class="c r" style="left:321px;top:373px;width:90px">54,98</div>
<div class="c r" style="left:412px;top:373px;width:30px">4,04</div>
<div class="c r" style="left:443px;top:373px;width:145px">60,62</div>
<div class="c r" style="left:589px;top:373px;width:104px">56,87</div>
<div class="c r" style="left:694px;top:373px;width:97px">4,07</div>
<div class="c r" style="left:890px;top:373px;width:131px">0,02</div>
<div class="c l" style="left:61px;top:385px;width:48px">Décembre</div>
<div class="c r" style="left:110px;top:385px;width:73px">144</div>
<div class="c r" style="left:184px;top:385px;width:73px">12</div>
<div class="c r" style="left:258px;top:385px;width:62px">66,9</div>
<div class="c r" style="left:321px;top:385px;width:90px">55,25</div>
<div class="c r" style="left:412px;top:385px;width:30px">4,20</div>
<div class="c r" style="left:443px;top:385px;width:145px">60,66</div>
<div class="c r" style="left:589px;top:385px;width:104px">57,08</div>
<div class="c r" style="left:694px;top:385px;width:97px">135,61</div>
<div class="c r" style="left:890px;top:385px;width:131px">96,52</div>
<div class="c l" style="left:61px;top:397px;width:48px">Janvier</div>
<div class="c r" style="left:110px;top:397px;width:73px">169</div>
<div class="c r" style="left:184px;top:397px;width:73px">13</div>
<div class="c r" style="left:258px;top:397px;width:62px">53,6</div>
<div class="c r" style="left:321px;top:397px;width:90px">55,53</div>
<div class="c r" style="left:412px;top:397px;width:30px">3,98</div>
<div class="c r" style="left:443px;top:397px;width:145px">60,69</div>
<div class="c r" style="left:589px;top:397px;width:104px">57,28</div>
<div class="c r" style="left:694px;top:397px;width:97px">3,72</div>
<div class="c r" style="left:890px;top:397px;width:131px">13,52</div>
<div class="c l" style="left:61px;top:412px;width:48px">Février</div>
<div class="c r" style="left:110px;top:412px;width:73px">196</div>
<div class="c r" style="left:184px;top:412px;width:73px">14</div>
<div class="c r" style="left:258px;top:412px;width:62px">54,3</div>
<div class="c r" style="left:321px;top:412px;width:90px">55,80</div>
<div class="c r" style="left:412px;top:412px;width:30px">3,99</div>
<div class="c r" style="left:443px;top:412px;width:145px">60,73</div>
<div class="c r" style="left:589px;top:412px;width:104px">57,48</div>
<div class="c r" style="left:694px;top:412px;width:97px">2,25</div>
<div class="c r" style="left:890px;top:412px;width:131px">10,11</div>
<div class="c l" style="left:61px;top:426px;width:48px">Mars</div>
<div class="c r" style="left:110px;top:426px;width:73px">225</div>
<div class="c r" style="left:184px;top:426px;width:73px">15</div>
<div class="c r" style="left:258px;top:426px;width:62px">66</div>
<div class="c r" style="left:321px;top:426px;width:90px">56,07</div>
<div class="c r" style="left:412px;top:426px;width:30px">4,19</div>
<div class="c r" style="left:443px;top:426px;width:145px">60,78</div>
<div class="c r" style="left:589px;top:426px;width:104px">57,68</div>
<div class="c r" style="left:694px;top:426px;width:97px">98,52</div>
<div class="c r" style="left:890px;top:426px;width:131px">69,19</div>
<div class="c l" style="left:61px;top:440px;width:48px">Avril</div>
<div class="c r" style="left:110px;top:440px;width:73px">256</div>
<div class="c r" style="left:184px;top:440px;width:73px">16</div>
<div class="c r" style="left:258px;top:440px;width:62px">60,8</div>
<div class="c r" style="left:321px;top:440px;width:90px">56,35</div>
<div class="c r" style="left:412px;top:440px;width:30px">4,11</div>
<div class="c r" style="left:443px;top:440px;width:145px">60,82</div>
<div class="c r" style="left:589px;top:440px;width:104px">57,89</div>
<div class="c r" style="left:694px;top:440px;width:97px">19,83</div>
<div class="c r" style="left:890px;top:440px;width:131px">8,49</div>
<div class="c l" style="left:61px;top:454px;width:48px">Mai</div>
<div class="c r" style="left:110px;top:454px;width:73px">289</div>
<div class="c r" style="left:184px;top:454px;width:73px">17</div>
<div class="c r" style="left:258px;top:454px;width:62px">62,2</div>
<div class="c r" style="left:321px;top:454px;width:90px">56,62</div>
<div class="c r" style="left:412px;top:454px;width:30px">4,13</div>
<div class="c r" style="left:443px;top:454px;width:145px">60,87</div>
<div class="c r" style="left:589px;top:454px;width:104px">58,09</div>
<div class="c r" style="left:694px;top:454px;width:97px">31,13</div>
<div class="c r" style="left:890px;top:454px;width:131px">16,89</div>
<div class="c l" style="left:61px;top:468px;width:48px">Juin</div>
<div class="c r" style="left:110px;top:468px;width:73px">324</div>
<div class="c r" style="left:184px;top:468px;width:73px">18</div>
<div class="c r" style="left:258px;top:468px;width:62px">61,3</div>
<div class="c r" style="left:321px;top:468px;width:90px">56,89</div>
<div class="c r" style="left:412px;top:468px;width:30px">4,12</div>
<div class="c r" style="left:443px;top:468px;width:145px">60,93</div>
<div class="c r" style="left:589px;top:468px;width:104px">58,30</div>
<div class="c r" style="left:694px;top:468px;width:97px">19,42</div>
<div class="c r" style="left:890px;top:468px;width:131px">9,03</div>
<div class="c l" style="left:61px;top:480px;width:48px">Juillet</div>
<div class="c r" style="left:110px;top:480px;width:73px">361</div>
<div class="c r" style="left:184px;top:480px;width:73px">19</div>
<div class="c r" style="left:258px;top:480px;width:62px">57,6</div>
<div class="c r" style="left:321px;top:480px;width:90px">57,17</div>
<div class="c r" style="left:412px;top:480px;width:30px">4,05</div>
<div class="c r" style="left:443px;top:480px;width:145px">60,98</div>
<div class="c r" style="left:589px;top:480px;width:104px">58,50</div>
<div class="c r" style="left:694px;top:480px;width:97px">0,19</div>
<div class="c r" style="left:890px;top:480px;width:131px">0,81</div>
<div class="c l" style="left:61px;top:492px;width:48px">Août</div>
<div class="c r" style="left:110px;top:492px;width:73px">400</div>
<div class="c r" style="left:184px;top:492px;width:73px">20</div>
<div class="c r" style="left:258px;top:492px;width:62px">52,7</div>
<div class="c r" style="left:321px;top:492px;width:90px">57,44</div>
<div class="c r" style="left:412px;top:492px;width:30px">3,96</div>
<div class="c r" style="left:443px;top:492px;width:145px">61,04</div>
<div class="c r" style="left:589px;top:492px;width:104px">58,71</div>
<div class="c r" style="left:694px;top:492px;width:97px">22,46</div>
<div class="c r" style="left:890px;top:492px;width:131px">36,10</div>
<div class="c l" style="left:61px;top:504px;width:48px">Septembre</div>
<div class="c r" style="left:110px;top:504px;width:73px">441</div>
<div class="c r" style="left:184px;top:504px;width:73px">21</div>
<div class="c r" style="left:258px;top:504px;width:62px">56,8</div>
<div class="c r" style="left:321px;top:504px;width:90px">57,71</div>
<div class="c r" style="left:412px;top:504px;width:30px">4,04</div>
<div class="c r" style="left:443px;top:504px;width:145px">61,10</div>
<div class="c r" style="left:589px;top:504px;width:104px">58,92</div>
<div class="c r" style="left:694px;top:504px;width:97px">0,83</div>
<div class="c r" style="left:890px;top:504px;width:131px">4,47</div>
<div class="c l" style="left:61px;top:516px;width:48px">Octobre</div>
<div class="c r" style="left:110px;top:516px;width:73px">484</div>
<div class="c r" style="left:184px;top:516px;width:73px">22</div>
<div class="c r" style="left:258px;top:516px;width:62px">63,7</div>
<div class="c r" style="left:321px;top:516px;width:90px">57,99</div>
<div class="c r" style="left:412px;top:516px;width:30px">4,15</div>
<div class="c r" style="left:443px;top:516px;width:145px">61,16</div>
<div class="c r" style="left:589px;top:516px;width:104px">59,12</div>
<div class="c r" style="left:694px;top:516px;width:97px">32,65</div>
<div class="c r" style="left:890px;top:516px;width:131px">20,95</div>
<div class="c l" style="left:61px;top:529px;width:48px">Novembre</div>
<div class="c r" style="left:110px;top:529px;width:73px">529</div>
<div class="c r" style="left:184px;top:529px;width:73px">23</div>
<div class="c r" style="left:258px;top:529px;width:62px">62,6</div>
<div class="c r" style="left:321px;top:529px;width:90px">58,26</div>
<div class="c r" style="left:412px;top:529px;width:30px">4,14</div>
<div class="c r" style="left:443px;top:529px;width:145px">61,23</div>
<div class="c r" style="left:589px;top:529px;width:104px">59,33</div>
<div class="c r" style="left:694px;top:529px;width:97px">18,85</div>
<div class="c r" style="left:890px;top:529px;width:131px">10,68</div>
<div class="c l" style="left:61px;top:544px;width:48px">Décembre</div>
<div class="c r" style="left:110px;top:544px;width:73px">576</div>
<div class="c r" style="left:184px;top:544px;width:73px">24</div>
<div class="c r" style="left:258px;top:544px;width:62px">71,1</div>
<div class="c r" style="left:321px;top:544px;width:90px">58,53</div>
<div class="c r" style="left:412px;top:544px;width:30px">4,26</div>
<div class="c r" style="left:443px;top:544px;width:145px">61,30</div>
<div class="c r" style="left:589px;top:544px;width:104px">59,54</div>
<div class="c r" style="left:694px;top:544px;width:97px">157,96</div>
<div class="c r" style="left:890px;top:544px;width:131px">133,60</div>
<div class="c l" style="left:61px;top:558px;width:48px">Janvier</div>
<div class="c r" style="left:110px;top:558px;width:73px">625</div>
<div class="c r" style="left:184px;top:558px;width:73px">25</div>
<div class="c r" style="left:258px;top:558px;width:62px">57,3</div>
<div class="c r" style="left:321px;top:558px;width:90px">58,80</div>
<div class="c r" style="left:412px;top:558px;width:30px">4,05</div>
<div class="c r" style="left:443px;top:558px;width:145px">61,37</div>
<div class="c r" style="left:589px;top:558px;width:104px">59,75</div>
<div class="c r" style="left:694px;top:558px;width:97px">2,26</div>
<div class="c r" style="left:890px;top:558px;width:131px">6,01</div>
<div class="c l" style="left:61px;top:572px;width:48px">Février</div>
<div class="c r" style="left:110px;top:572px;width:73px">676</div>
<div class="c r" style="left:184px;top:572px;width:73px">26</div>
<div class="c r" style="left:258px;top:572px;width:62px">59,2</div>
<div class="c r" style="left:321px;top:572px;width:90px">59,08</div>
<div class="c r" style="left:412px;top:572px;width:30px">4,08</div>
<div class="c r" style="left:443px;top:572px;width:145px">61,45</div>
<div class="c r" style="left:589px;top:572px;width:104px">59,96</div>
<div class="c r" style="left:694px;top:572px;width:97px">0,01</div>
<div class="c r" style="left:890px;top:572px;width:131px">0,58</div>
<div class="c l" style="left:61px;top:586px;width:48px">Mars</div>
<div class="c r" style="left:110px;top:586px;width:73px">729</div>
<div class="c r" style="left:184px;top:586px;width:73px">27</div>
<div class="c r" style="left:258px;top:586px;width:62px">65,6</div>
<div class="c r" style="left:321px;top:586px;width:90px">59,35</div>
<div class="c r" style="left:412px;top:586px;width:30px">4,18</div>
<div class="c r" style="left:443px;top:586px;width:145px">61,53</div>
<div class="c r" style="left:589px;top:586px;width:104px">60,17</div>
<div class="c r" style="left:694px;top:586px;width:97px">39,05</div>
<div class="c r" style="left:890px;top:586px;width:131px">29,43</div>
<div class="c l" style="left:61px;top:600px;width:48px">Avril</div>
<div class="c r" style="left:110px;top:600px;width:73px">784</div>
<div class="c r" style="left:184px;top:600px;width:73px">28</div>
<div class="c r" style="left:258px;top:600px;width:62px">62</div>
<div class="c r" style="left:321px;top:600px;width:90px">59,62</div>
<div class="c r" style="left:412px;top:600px;width:30px">4,13</div>
<div class="c r" style="left:443px;top:600px;width:145px">61,61</div>
<div class="c r" style="left:589px;top:600px;width:104px">60,39</div>
<div class="c r" style="left:694px;top:600px;width:97px">5,64</div>
<div class="c r" style="left:890px;top:600px;width:131px">2,60</div>
<div class="c l" style="left:61px;top:614px;width:48px">Mai</div>
<div class="c r" style="left:110px;top:614px;width:73px">841</div>
<div class="c r" style="left:184px;top:614px;width:73px">29</div>
<div class="c r" style="left:258px;top:614px;width:62px">65,2</div>
<div class="c r" style="left:321px;top:614px;width:90px">59,90</div>
<div class="c r" style="left:412px;top:614px;width:30px">4,18</div>
<div class="c r" style="left:443px;top:614px;width:145px">61,70</div>
<div class="c r" style="left:589px;top:614px;width:104px">60,60</div>
<div class="c r" style="left:694px;top:614px;width:97px">28,12</div>
<div class="c r" style="left:890px;top:614px;width:131px">21,16</div>
<div class="c l" style="left:61px;top:626px;width:48px">Juin</div>
<div class="c r" style="left:110px;top:626px;width:73px">900</div>
<div class="c r" style="left:184px;top:626px;width:73px">30</div>
<div class="c r" style="left:258px;top:626px;width:62px">65</div>
<div class="c r" style="left:321px;top:626px;width:90px">60,17</div>
<div class="c r" style="left:412px;top:626px;width:30px">4,17</div>
<div class="c r" style="left:443px;top:626px;width:145px">61,78</div>
<div class="c r" style="left:589px;top:626px;width:104px">60,81</div>
<div class="c r" style="left:694px;top:626px;width:97px">23,33</div>
<div class="c r" style="left:890px;top:626px;width:131px">17,52</div>
<div class="c l" style="left:61px;top:638px;width:48px">Juillet</div>
<div class="c r" style="left:110px;top:638px;width:73px">961</div>
<div class="c r" style="left:184px;top:638px;width:73px">31</div>
<div class="c r" style="left:258px;top:638px;width:62px">66,4</div>
<div class="c r" style="left:321px;top:638px;width:90px">60,44</div>
<div class="c r" style="left:412px;top:638px;width:30px">4,20</div>
<div class="c r" style="left:443px;top:638px;width:145px">61,88</div>
<div class="c r" style="left:589px;top:638px;width:104px">61,03</div>
<div class="c r" style="left:694px;top:638px;width:97px">35,48</div>
<div class="c r" style="left:890px;top:638px;width:131px">28,84</div>
<div class="c l" style="left:61px;top:650px;width:48px">Août</div>
<div class="c r" style="left:110px;top:650px;width:73px">1024</div>
<div class="c r" style="left:184px;top:650px;width:73px">32</div>
<div class="c r" style="left:258px;top:650px;width:62px">58,9</div>
<div class="c r" style="left:321px;top:650px;width:90px">60,72</div>
<div class="c r" style="left:412px;top:650px;width:30px">4,08</div>
<div class="c r" style="left:443px;top:650px;width:145px">61,97</div>
<div class="c r" style="left:589px;top:650px;width:104px">61,24</div>
<div class="c r" style="left:694px;top:650px;width:97px">3,30</div>
<div class="c r" style="left:890px;top:650px;width:131px">5,50</div>
<div class="c l" style="left:61px;top:663px;width:48px">Septembre</div>
<div class="c r" style="left:110px;top:663px;width:73px">1089</div>
<div class="c r" style="left:184px;top:663px;width:73px">33</div>
<div class="c r" style="left:258px;top:663px;width:62px">62,8</div>
<div class="c r" style="left:321px;top:663px;width:90px">60,99</div>
<div class="c r" style="left:412px;top:663px;width:30px">4,14</div>
<div class="c r" style="left:443px;top:663px;width:145px">62,07</div>
<div class="c r" style="left:589px;top:663px;width:104px">61,46</div>
<div class="c r" style="left:694px;top:663px;width:97px">3,28</div>
<div class="c r" style="left:890px;top:663px;width:131px">1,79</div>
<div class="c l" style="left:61px;top:678px;width:48px">Octobre</div>
<div class="c r" style="left:110px;top:678px;width:73px">1156</div>
<div class="c r" style="left:184px;top:678px;width:73px">34</div>
<div class="c r" style="left:258px;top:678px;width:62px">68,8</div>
<div class="c r" style="left:321px;top:678px;width:90px">61,26</div>
<div class="c r" style="left:412px;top:678px;width:30px">4,23</div>
<div class="c r" style="left:443px;top:678px;width:145px">62,17</div>
<div class="c r" style="left:589px;top:678px;width:104px">61,68</div>
<div class="c r" style="left:694px;top:678px;width:97px">56,81</div>
<div class="c r" style="left:890px;top:678px;width:131px">50,72</div>
<div class="c l" style="left:61px;top:692px;width:48px">Novembre</div>
<div class="c r" style="left:110px;top:692px;width:73px">1225</div>
<div class="c r" style="left:184px;top:692px;width:73px">35</div>
<div class="c r" style="left:258px;top:692px;width:62px">68</div>
<div class="c r" style="left:321px;top:692px;width:90px">61,54</div>
<div class="c r" style="left:412px;top:692px;width:30px">4,22</div>
<div class="c r" style="left:443px;top:692px;width:145px">62,27</div>
<div class="c r" style="left:589px;top:692px;width:104px">61,90</div>
<div class="c r" style="left:694px;top:692px;width:97px">41,79</div>
<div class="c r" style="left:890px;top:692px;width:131px">37,26</div>
<div class="c l" style="left:61px;top:706px;width:48px">Décembre</div>
<div class="c r" style="left:110px;top:706px;width:73px">1296</div>
<div class="c r" style="left:184px;top:706px;width:73px">36</div>
<div class="c r" style="left:258px;top:706px;width:62px">72,2</div>
<div class="c r" style="left:321px;top:706px;width:90px">61,81</div>
<div class="c r" style="left:412px;top:706px;width:30px">4,28</div>
<div class="c r" style="left:443px;top:706px;width:145px">62,38</div>
<div class="c r" style="left:589px;top:706px;width:104px">62,11</div>
<div class="c r" style="left:694px;top:706px;width:97px">107,98</div>
<div class="c r" style="left:890px;top:706px;width:131px">101,72</div>
<div class="c l" style="left:61px;top:718px;width:48px">Janvier</div>
<div class="c r" style="left:110px;top:718px;width:73px">1369</div>
<div class="c r" style="left:184px;top:718px;width:73px">37</div>
<div class="c r" style="left:258px;top:718px;width:62px">58,8</div>
<div class="c r" style="left:321px;top:718px;width:90px">62,08</div>
<div class="c r" style="left:412px;top:718px;width:30px">4,07</div>
<div class="c r" style="left:443px;top:718px;width:145px">62,48</div>
<div class="c r" style="left:589px;top:718px;width:104px">62,33</div>
<div class="c r" style="left:694px;top:718px;width:97px">10,77</div>
<div class="c r" style="left:890px;top:718px;width:131px">12,49</div>
<div class="c l" style="left:61px;top:730px;width:48px">Février</div>
<div class="c r" style="left:110px;top:730px;width:73px">1444</div>
<div class="c r" style="left:184px;top:730px;width:73px">38</div>
<div class="c r" style="left:258px;top:730px;width:62px">62,1</div>
<div class="c r" style="left:321px;top:730px;width:90px">62,35</div>
<div class="c r" style="left:412px;top:730px;width:30px">4,13</div>
<div class="c r" style="left:443px;top:730px;width:145px">62,60</div>
<div class="c r" style="left:589px;top:730px;width:104px">62,55</div>
<div class="c r" style="left:694px;top:730px;width:97px">0,07</div>
<div class="c r" style="left:890px;top:730px;width:131px">0,21</div>
<div class="c l" style="left:61px;top:742px;width:48px">Mars</div>
<div class="c r" style="left:110px;top:742px;width:73px">1521</div>
<div class="c r" style="left:184px;top:742px;width:73px">39</div>
<div class="c r" style="left:258px;top:742px;width:62px">73,1</div>
<div class="c r" style="left:321px;top:742px;width:90px">62,63</div>
<div class="c r" style="left:412px;top:742px;width:30px">4,29</div>
<div class="c r" style="left:443px;top:742px;width:145px">62,71</div>
<div class="c r" style="left:589px;top:742px;width:104px">62,77</div>
<div class="c r" style="left:694px;top:742px;width:97px">109,66</div>
<div class="c r" style="left:890px;top:742px;width:131px">106,61</div>
<div class="c l" style="left:61px;top:754px;width:48px">Avril</div>
<div class="c r" style="left:110px;top:754px;width:73px">1600</div>
<div class="c r" style="left:184px;top:754px;width:73px">40</div>
<div class="c r" style="left:258px;top:754px;width:62px">66,5</div>
<div class="c r" style="left:321px;top:754px;width:90px">62,90</div>
<div class="c r" style="left:412px;top:754px;width:30px">4,20</div>
<div class="c r" style="left:443px;top:754px;width:145px">62,83</div>
<div class="c r" style="left:589px;top:754px;width:104px">63,00</div>
<div class="c r" style="left:694px;top:754px;width:97px">12,95</div>
<div class="c r" style="left:890px;top:754px;width:131px">12,27</div>
<div class="c l" style="left:61px;top:766px;width:48px">Mai</div>
<div class="c r" style="left:110px;top:766px;width:73px">1681</div>
<div class="c r" style="left:184px;top:766px;width:73px">41</div>
<div class="c r" style="left:258px;top:766px;width:62px">62</div>
<div class="c r" style="left:321px;top:766px;width:90px">63,17</div>
<div class="c r" style="left:412px;top:766px;width:30px">4,13</div>
<div class="c r" style="left:443px;top:766px;width:145px">62,95</div>
<div class="c r" style="left:589px;top:766px;width:104px">63,22</div>
<div class="c r" style="left:694px;top:766px;width:97px">1,38</div>
<div class="c r" style="left:890px;top:766px;width:131px">1,49</div>
<div class="c l" style="left:61px;top:778px;width:48px">Juin</div>
<div class="c r" style="left:110px;top:778px;width:73px">1764</div>
<div class="c r" style="left:184px;top:778px;width:73px">42</div>
<div class="c r" style="left:258px;top:778px;width:62px">62,2</div>
<div class="c r" style="left:321px;top:778px;width:90px">63,45</div>
<div class="c r" style="left:412px;top:778px;width:30px">4,13</div>
<div class="c r" style="left:443px;top:778px;width:145px">63,07</div>
<div class="c r" style="left:589px;top:778px;width:104px">63,44</div>
<div class="c r" style="left:694px;top:778px;width:97px">1,56</div>
<div class="c r" style="left:890px;top:778px;width:131px">1,54</div>
<div class="c l" style="left:61px;top:790px;width:48px">Juillet</div>
<div class="c r" style="left:110px;top:790px;width:73px">1849</div>
<div class="c r" style="left:184px;top:790px;width:73px">43</div>
<div class="c r" style="left:258px;top:790px;width:62px">60,4</div>
<div class="c r" style="left:321px;top:790px;width:90px">63,72</div>
<div class="c r" style="left:412px;top:790px;width:30px">4,10</div>
<div class="c r" style="left:443px;top:790px;width:145px">63,20</div>
<div class="c r" style="left:589px;top:790px;width:104px">63,67</div>
<div class="c r" style="left:694px;top:790px;width:97px">11,02</div>
<div class="c r" style="left:890px;top:790px;width:131px">10,67</div>
<div class="c l" style="left:61px;top:802px;width:48px">Août</div>
<div class="c r" style="left:110px;top:802px;width:73px">1936</div>
<div class="c r" style="left:184px;top:802px;width:73px">44</div>
<div class="c r" style="left:258px;top:802px;width:62px">55,9</div>
<div class="c r" style="left:321px;top:802px;width:90px">63,99</div>
<div class="c r" style="left:412px;top:802px;width:30px">4,02</div>
<div class="c r" style="left:443px;top:802px;width:145px">63,33</div>
<div class="c r" style="left:589px;top:802px;width:104px">63,89</div>
<div class="c r" style="left:694px;top:802px;width:97px">65,50</div>
<div class="c r" style="left:890px;top:802px;width:131px">63,86</div>
<div class="c l" style="left:61px;top:814px;width:48px">Septembre</div>
<div class="c r" style="left:110px;top:814px;width:73px">2025</div>
<div class="c r" style="left:184px;top:814px;width:73px">45</div>
<div class="c r" style="left:258px;top:814px;width:62px">58,4</div>
<div class="c r" style="left:321px;top:814px;width:90px">64,27</div>
<div class="c r" style="left:412px;top:814px;width:30px">4,07</div>
<div class="c r" style="left:443px;top:814px;width:145px">63,46</div>
<div class="c r" style="left:589px;top:814px;width:104px">64,12</div>
<div class="c r" style="left:694px;top:814px;width:97px">34,42</div>
<div class="c r" style="left:890px;top:814px;width:131px">32,68</div>
<div class="c l" style="left:61px;top:826px;width:48px">Octobre</div>
<div class="c r" style="left:110px;top:826px;width:73px">2116</div>
<div class="c r" style="left:184px;top:826px;width:73px">46</div>
<div class="c r" style="left:258px;top:826px;width:62px">67,5</div>
<div class="c r" style="left:321px;top:826px;width:90px">64,54</div>
<div class="c r" style="left:412px;top:826px;width:30px">4,21</div>
<div class="c r" style="left:443px;top:826px;width:145px">63,60</div>
<div class="c r" style="left:589px;top:826px;width:104px">64,34</div>
<div class="c r" style="left:694px;top:826px;width:97px">8,76</div>
<div class="c r" style="left:890px;top:826px;width:131px">9,96</div>
<div class="c l" style="left:61px;top:839px;width:48px">Novembre</div>
<div class="c r" style="left:110px;top:839px;width:73px">2209</div>
<div class="c r" style="left:184px;top:839px;width:73px">47</div>
<div class="c r" style="left:258px;top:839px;width:62px">66,6</div>
<div class="c r" style="left:321px;top:839px;width:90px">64,81</div>
<div class="c r" style="left:412px;top:839px;width:30px">4,20</div>
<div class="c r" style="left:443px;top:839px;width:145px">63,74</div>
<div class="c r" style="left:589px;top:839px;width:104px">64,57</div>
<div class="c r" style="left:694px;top:839px;width:97px">3,19</div>
<div class="c r" style="left:890px;top:839px;width:131px">4,12</div>
<div class="c l" style="left:61px;top:854px;width:48px">Décembre</div>
<div class="c r" style="left:110px;top:854px;width:73px">2304</div>
<div class="c r" style="left:184px;top:854px;width:73px">48</div>
<div class="c r" style="left:258px;top:854px;width:62px">68,7</div>
<div class="c r" style="left:321px;top:854px;width:90px">65,09</div>
<div class="c r" style="left:412px;top:854px;width:30px">4,23</div>
<div class="c r" style="left:443px;top:854px;width:145px">63,88</div>
<div class="c r" style="left:589px;top:854px;width:104px">64,80</div>
<div class="c r" style="left:694px;top:854px;width:97px">13,06</div>
<div class="c r" style="left:890px;top:854px;width:131px">15,22</div>
<div class="c l" style="left:61px;top:869px;width:48px">Janvier</div>
<div class="c r" style="left:110px;top:869px;width:73px">2401</div>
<div class="c r" style="left:184px;top:869px;width:73px">49</div>
<div class="c r" style="left:258px;top:869px;width:62px">56,2</div>
<div class="c r" style="left:321px;top:869px;width:90px">65,36</div>
<div class="c r" style="left:412px;top:869px;width:30px">4,03</div>
<div class="c r" style="left:443px;top:869px;width:145px">64,02</div>
<div class="c r" style="left:589px;top:869px;width:104px">65,03</div>
<div class="c r" style="left:694px;top:869px;width:97px">83,88</div>
<div class="c r" style="left:890px;top:869px;width:131px">77,92</div>
<div class="c l" style="left:61px;top:883px;width:48px">Février</div>
<div class="c r" style="left:110px;top:883px;width:73px">2500</div>
<div class="c r" style="left:184px;top:883px;width:73px">50</div>
<div class="c r" style="left:258px;top:883px;width:62px">59,3</div>
<div class="c r" style="left:321px;top:883px;width:90px">65,63</div>
<div class="c r" style="left:412px;top:883px;width:30px">4,08</div>
<div class="c r" style="left:443px;top:883px;width:145px">64,17</div>
<div class="c r" style="left:589px;top:883px;width:104px">65,26</div>
<div class="c r" style="left:694px;top:883px;width:97px">40,09</div>
<div class="c r" style="left:890px;top:883px;width:131px">35,49</div>
<div class="c l" style="left:61px;top:897px;width:48px">Mars</div>
<div class="c r" style="left:110px;top:897px;width:73px">2601</div>
<div class="c r" style="left:184px;top:897px;width:73px">51</div>
<div class="c r" style="left:258px;top:897px;width:62px">68,2</div>
<div class="c r" style="left:321px;top:897px;width:90px">65,91</div>
<div class="c r" style="left:412px;top:897px;width:30px">4,22</div>
<div class="c r" style="left:443px;top:897px;width:145px">64,32</div>
<div class="c r" style="left:589px;top:897px;width:104px">65,49</div>
<div class="c r" style="left:694px;top:897px;width:97px">5,27</div>
<div class="c r" style="left:890px;top:897px;width:131px">7,36</div>
<div class="c l" style="left:61px;top:911px;width:48px">Avril</div>
<div class="c r" style="left:110px;top:911px;width:73px">2704</div>
<div class="c r" style="left:184px;top:911px;width:73px">52</div>
<div class="c r" style="left:258px;top:911px;width:62px">65,1</div>
<div class="c r" style="left:321px;top:911px;width:90px">66,18</div>
<div class="c r" style="left:412px;top:911px;width:30px">4,18</div>
<div class="c r" style="left:443px;top:911px;width:145px">64,48</div>
<div class="c r" style="left:589px;top:911px;width:104px">65,72</div>
<div class="c r" style="left:694px;top:911px;width:97px">1,16</div>
<div class="c r" style="left:890px;top:911px;width:131px">0,38</div>
<div class="c l" style="left:61px;top:925px;width:48px">Mai</div>
<div class="c r" style="left:110px;top:925px;width:73px">2809</div>
<div class="c r" style="left:184px;top:925px;width:73px">53</div>
<div class="c r" style="left:258px;top:925px;width:62px">64,6</div>
<div class="c r" style="left:321px;top:925px;width:90px">66,45</div>
<div class="c r" style="left:412px;top:925px;width:30px">4,17</div>
<div class="c r" style="left:443px;top:925px;width:145px">64,63</div>
<div class="c r" style="left:589px;top:925px;width:104px">65,95</div>
<div class="c r" style="left:694px;top:925px;width:97px">3,43</div>
<div class="c r" style="left:890px;top:925px;width:131px">1,83</div>
<div class="c l" style="left:61px;top:939px;width:48px">Juin</div>
<div class="c r" style="left:110px;top:939px;width:73px">2916</div>
<div class="c r" style="left:184px;top:939px;width:73px">54</div>
<div class="c r" style="left:258px;top:939px;width:62px">62,8</div>
<div class="c r" style="left:321px;top:939px;width:90px">66,72</div>
<div class="c r" style="left:412px;top:939px;width:30px">4,14</div>
<div class="c r" style="left:443px;top:939px;width:145px">64,79</div>
<div class="c r" style="left:589px;top:939px;width:104px">66,18</div>
<div class="c r" style="left:694px;top:939px;width:97px">15,40</div>
<div class="c r" style="left:890px;top:939px;width:131px">11,45</div>
<div class="c l" style="left:61px;top:953px;width:48px">Juillet</div>
<div class="c r" style="left:110px;top:953px;width:73px">3025</div>
<div class="c r" style="left:184px;top:953px;width:73px">55</div>
<div class="c r" style="left:258px;top:953px;width:62px">62,2</div>
<div class="c r" style="left:321px;top:953px;width:90px">67,00</div>
<div class="c r" style="left:412px;top:953px;width:30px">4,15</div>
<div class="c r" style="left:443px;top:953px;width:145px">64,96</div>
<div class="c r" style="left:589px;top:953px;width:104px">66,42</div>
<div class="c r" style="left:694px;top:953px;width:97px">12,67</div>
<div class="c r" style="left:890px;top:953px;width:131px">9,72</div>
<div class="c r" style="left:792px;top:236px;width:97px">74,71</div>
<div class="c" style="left:20px;top:309px;width:40px;text-align:center">1982</div>
<div class="c" style="left:20px;top:470.5px;width:40px;text-align:center">1983</div>
<div class="c" style="left:20px;top:631px;width:40px;text-align:center">1984</div>
<div class="c" style="left:20px;top:786px;width:40px;text-align:center">1985</div>
<div class="c" style="left:20px;top:941px;width:40px;text-align:center">1986</div>
<div style="left:441px;top:247px;width:145px;height:14px;border:2px solid #217346;box-shadow:inset 0 0 0 1px #fff"></div>
<div style="left:586px;top:261px;width:5px;height:5px;background:#217346;border:1px solid #fff"></div>
<div style="left:1249px;top:248px;width:323px;height:1px;background:#000;"></div>
<div style="left:1249px;top:263px;width:323px;height:1px;background:#000;"></div>
<div style="left:1249px;top:277px;width:323px;height:1px;background:#000;"></div>
<div style="left:1249px;top:291px;width:323px;height:1px;background:#000;"></div>
<div style="left:1249px;top:305px;width:323px;height:1px;background:#000;"></div>
<div style="left:1249px;top:319px;width:323px;height:1px;background:#000;"></div>
<div style="left:1249px;top:333px;width:323px;height:1px;background:#000;"></div>
<div style="left:1249px;top:347px;width:323px;height:1px;background:#000;"></div>
<div style="left:1249px;top:361px;width:323px;height:1px;background:#000;"></div>
<div style="left:1249px;top:233px;width:1px;height:129px;background:#000;"></div>
<div style="left:1571px;top:233px;width:1px;height:129px;background:#000;"></div>
<div style="left:1332px;top:248px;width:1px;height:114px;background:#000;"></div>
<div style="left:1476px;top:248px;width:1px;height:114px;background:#000;"></div>
<div style="left:1248px;top:232px;width:320px;height:13px;border:2px solid #000"></div>
<div class="h" style="left:1250px;top:233px;width:321px;color:#ff0000;font-size:11.2px;">Modèle linéaire</div>
<div class="h" style="left:1250px;top:248px;width:82px;color:#000;font-size:11.2px;">Indicateurs</div>
<div class="h" style="left:1333px;top:248px;width:143px;color:#000;font-size:11.2px;">Formule Excel</div>
<div class="h" style="left:1477px;top:248px;width:94px;color:#000;font-size:11.2px;">Formule brut</div>
<div class="h" style="left:1250px;top:263px;width:82px;color:#ff0000;font-size:10.5px;letter-spacing:0.6px;">Cov(y, t)</div>
<div class="c r" style="left:1333px;top:265px;width:143px">737,29</div>
<div class="c" style="left:1477px;top:265px;width:94px;text-align:center">-</div>
<div class="h" style="left:1250px;top:277px;width:82px;color:#ff0000;font-size:10.5px;letter-spacing:0.6px;">Moy(y)</div>
<div class="c r" style="left:1333px;top:279px;width:143px">76,69</div>
<div class="c" style="left:1477px;top:279px;width:94px;text-align:center">-</div>
<div class="h" style="left:1250px;top:291px;width:82px;color:#ff0000;font-size:10.5px;letter-spacing:0.6px;">Moy(t)</div>
<div class="c r" style="left:1333px;top:293px;width:143px">90,50</div>
<div class="c" style="left:1477px;top:293px;width:94px;text-align:center">-</div>
<div class="h" style="left:1250px;top:305px;width:82px;color:#ff0000;font-size:10.5px;letter-spacing:0.6px;">Var(y)</div>
<div class="c r" style="left:1333px;top:307px;width:143px">249,91</div>
<div class="c" style="left:1477px;top:307px;width:94px;text-align:center">-</div>
<div class="h" style="left:1250px;top:319px;width:82px;color:#ff0000;font-size:10.5px;letter-spacing:0.6px;">Var(t)</div>
<div class="c r" style="left:1333px;top:321px;width:143px">2699,92</div>
<div class="c" style="left:1477px;top:321px;width:94px;text-align:center">-</div>
<div class="h" style="left:1250px;top:333px;width:82px;color:#ff0000;font-size:10.5px;letter-spacing:0.6px;">a</div>
<div class="c r" style="left:1333px;top:335px;width:143px">0,27</div>
<div class="c" style="left:1477px;top:335px;width:94px;text-align:center">0,27</div>
<div class="h" style="left:1250px;top:347px;width:82px;color:#ff0000;font-size:10.5px;letter-spacing:0.6px;">b</div>
<div class="c r" style="left:1333px;top:349px;width:143px">51,98</div>
<div class="c" style="left:1477px;top:349px;width:94px;text-align:center">-</div>
<div style="left:1332px;top:556px;width:240px;height:1px;background:#000;"></div>
<div style="left:1332px;top:570px;width:240px;height:1px;background:#000;"></div>
<div style="left:1332px;top:584px;width:240px;height:1px;background:#000;"></div>
<div style="left:1332px;top:598px;width:240px;height:1px;background:#000;"></div>
<div style="left:1332px;top:612px;width:240px;height:1px;background:#000;"></div>
<div style="left:1332px;top:626px;width:240px;height:1px;background:#000;"></div>
<div style="left:1332px;top:541px;width:1px;height:86px;background:#000;"></div>
<div style="left:1571px;top:541px;width:1px;height:86px;background:#000;"></div>
<div style="left:1476px;top:556px;width:1px;height:71px;background:#000;"></div>
<div style="left:1331px;top:540px;width:237px;height:13px;border:2px solid #000"></div>
<div class="h" style="left:1333px;top:541px;width:238px;color:#ff0000;font-size:11.2px;">Modèle exponentielle</div>
<div class="h" style="left:1333px;top:556px;width:143px;color:#ff0000;font-size:10.5px;letter-spacing:0.6px;">Cov(z, t)</div>
<div class="c r" style="left:1477px;top:558px;width:94px">9,52</div>
<div class="h" style="left:1333px;top:570px;width:143px;color:#ff0000;font-size:10.5px;letter-spacing:0.6px;">c (Cov(z,t)/V(t)</div>
<div class="c r" style="left:1477px;top:572px;width:94px">0,00353</div>
<div class="h" style="left:1333px;top:584px;width:143px;color:#ff0000;font-size:10.5px;letter-spacing:0.6px;">b (ln(d))</div>
<div class="c r" style="left:1477px;top:586px;width:94px">4,00</div>
<div class="h" style="left:1333px;top:598px;width:143px;color:#ff0000;font-size:10.5px;letter-spacing:0.6px;">d</div>
<div class="c r" style="left:1477px;top:600px;width:94px">54,71</div>
<div class="h" style="left:1333px;top:612px;width:143px;color:#ff0000;font-size:10.5px;letter-spacing:0.6px;">R²</div>
<div style="left:1107px;top:690px;width:226px;height:1px;background:#000;"></div>
<div style="left:1107px;top:704px;width:226px;height:1px;background:#000;"></div>
<div style="left:1107px;top:718px;width:226px;height:1px;background:#000;"></div>
<div style="left:1107px;top:675px;width:1px;height:44px;background:#000;"></div>
<div style="left:1332px;top:675px;width:1px;height:44px;background:#000;"></div>
<div style="left:1249px;top:690px;width:1px;height:29px;background:#000;"></div>
<div style="left:1106px;top:674px;width:223px;height:13px;border:2px solid #000"></div>
<div class="h" style="left:1108px;top:675px;width:224px;color:#ff0000;font-size:11.2px;">Meilleur modèle</div>
<div class="h" style="left:1108px;top:690px;width:141px;color:#ff0000;font-size:10.5px;letter-spacing:0.6px;">Somme résidu linéaire</div>
<div class="c r" style="left:1250px;top:692px;width:82px">8743,46</div>
<div class="h" style="left:1108px;top:704px;width:141px;color:#ff0000;font-size:10.5px;letter-spacing:0.6px;">Somme résidu exp</div>
<div class="c r" style="left:1250px;top:706px;width:82px">7745,18</div>
<div style="left:1249px;top:866px;width:323px;height:1px;background:#000;"></div>
<div style="left:1249px;top:881px;width:323px;height:1px;background:#000;"></div>
<div style="left:1249px;top:895px;width:323px;height:1px;background:#000;"></div>
<div style="left:1249px;top:909px;width:323px;height:1px;background:#000;"></div>
<div style="left:1249px;top:923px;width:323px;height:1px;background:#000;"></div>
<div style="left:1249px;top:937px;width:323px;height:1px;background:#000;"></div>
<div style="left:1249px;top:951px;width:323px;height:1px;background:#000;"></div>
<div style="left:1249px;top:965px;width:323px;height:1px;background:#000;"></div>
<div style="left:1249px;top:851px;width:1px;height:110px;background:#000;"></div>
<div style="left:1571px;top:851px;width:1px;height:110px;background:#000;"></div>
<div style="left:1332px;top:866px;width:1px;height:95px;background:#000;"></div>
<div style="left:1476px;top:866px;width:1px;height:95px;background:#000;"></div>
<div style="left:1248px;top:850px;width:320px;height:13px;border:2px solid #000"></div>
<div class="h" style="left:1250px;top:851px;width:321px;color:#ff0000;font-size:11.2px;">Modèle quadratique</div>
<div class="h" style="left:1250px;top:866px;width:82px;color:#000;font-size:11.2px;">Indicateurs</div>
<div class="h" style="left:1333px;top:866px;width:143px;color:#000;font-size:11.2px;">Formule Excel</div>
<div class="h" style="left:1477px;top:866px;width:94px;color:#000;font-size:11.2px;">Formule brut</div>
<div class="h" style="left:1250px;top:881px;width:82px;color:#ff0000;font-size:10.5px;letter-spacing:0.6px;">Cov(y, t²)</div>
<div class="c r" style="left:1333px;top:883px;width:143px">140683,11</div>
<div class="c" style="left:1477px;top:883px;width:94px;text-align:center">-</div>
<div class="h" style="left:1250px;top:895px;width:82px;color:#ff0000;font-size:10.5px;letter-spacing:0.6px;">Moy(y)</div>
<div class="c r" style="left:1333px;top:897px;width:143px">76,69</div>
<div class="c" style="left:1477px;top:897px;width:94px;text-align:center">-</div>
<div class="h" style="left:1250px;top:909px;width:82px;color:#ff0000;font-size:10.5px;letter-spacing:0.6px;">Moy(t)</div>
<div class="c r" style="left:1333px;top:911px;width:143px">10890,17</div>
<div class="c" style="left:1477px;top:911px;width:94px;text-align:center">-</div>
<div class="h" style="left:1250px;top:923px;width:82px;color:#ff0000;font-size:10.5px;letter-spacing:0.6px;">Var(y)</div>
<div class="c r" style="left:1333px;top:925px;width:143px">249,91</div>
<div class="c" style="left:1477px;top:925px;width:94px;text-align:center">-</div>
<div class="h" style="left:1250px;top:937px;width:82px;color:#ff0000;font-size:10.5px;letter-spacing:0.6px;">Var(t)</div>
<div class="c r" style="left:1333px;top:939px;width:143px">94283069,94</div>
<div class="c" style="left:1477px;top:939px;width:94px;text-align:center">-</div>
<div class="h" style="left:1250px;top:951px;width:82px;color:#ff0000;font-size:10.5px;letter-spacing:0.6px;">a</div>
<div class="c r" style="left:1333px;top:953px;width:143px">0,00149</div>
<div class="c" style="left:1477px;top:953px;width:94px;text-align:center">0,00</div>
<div style="left:1294px;top:399px;width:207px;height:75px;background:#4f81bd;border:2px solid #3d6594;border-radius:1px"></div>
<div class="t" style="left:1301.7px;top:404.5px;font-size:9.5px;line-height:9.5px;color:#fff;transform:scaleX(1.010);transform-origin:0 0;">Equation ajustement linéaire :</div>
<div class="t" style="left:1301.7px;top:417.0px;font-size:9.5px;line-height:9.5px;color:#fff;transform:scaleX(0.987);transform-origin:0 0;">ft = 0,00351 t + 4,00207</div>
<div class="t" style="left:1301.7px;top:442.0px;font-size:9.5px;line-height:9.5px;color:#fff;transform:scaleX(1.009);transform-origin:0 0;">Equation ajustement exponentiel :</div>
<div class="t" style="left:1304.0px;top:455.0px;font-size:9.5px;line-height:9.5px;color:#fff;transform:scaleX(1.013);transform-origin:0 0;">fr = 54,71 * exp(0,00351*t)</div>
<svg style="left:1582px;top:241px;overflow:hidden" width="76" height="264" viewBox="0 0 76 264"><rect x="0.5" y="0.5" width="81" height="263" fill="#fff" stroke="#d9d9d9"/><path d="M46 197.6H76" stroke="#d9d9d9" stroke-width="1"/><text x="38" y="200.6" font-size="8.5" fill="#595959" text-anchor="end" font-family="Liberation Sans">0</text><path d="M46 174.3H76" stroke="#d9d9d9" stroke-width="1"/><text x="38" y="177.3" font-size="8.5" fill="#595959" text-anchor="end" font-family="Liberation Sans">20</text><path d="M46 150.9H76" stroke="#d9d9d9" stroke-width="1"/><text x="38" y="153.9" font-size="8.5" fill="#595959" text-anchor="end" font-family="Liberation Sans">40</text><path d="M46 127.6H76" stroke="#d9d9d9" stroke-width="1"/><text x="38" y="130.6" font-size="8.5" fill="#595959" text-anchor="end" font-family="Liberation Sans">60</text><path d="M46 104.3H76" stroke="#d9d9d9" stroke-width="1"/><text x="38" y="107.3" font-size="8.5" fill="#595959" text-anchor="end" font-family="Liberation Sans">80</text><path d="M46 81.0H76" stroke="#d9d9d9" stroke-width="1"/><text x="38" y="84.0" font-size="8.5" fill="#595959" text-anchor="end" font-family="Liberation Sans">100</text><path d="M46 57.6H76" stroke="#d9d9d9" stroke-width="1"/><text x="38" y="60.6" font-size="8.5" fill="#595959" text-anchor="end" font-family="Liberation Sans">120</text><path d="M46 34.3H76" stroke="#d9d9d9" stroke-width="1"/><text x="38" y="37.3" font-size="8.5" fill="#595959" text-anchor="end" font-family="Liberation Sans">140</text><polyline points="46.5,137.2 48.8,133.4 51.1,123.4 53.5,129.5 55.8,128.4 58.1,131.0 60.4,134.0 62.7,140.7 65.1,135.9 67.4,129.4 69.7,131.1 72.0,119.6 74.3,135.1 76.7,134.3" fill="none" stroke="#4f81bd" stroke-width="2"/><polyline points="46.5,136.7 48.8,136.3 51.1,136.0 53.5,135.7 55.8,135.4 58.1,135.1 60.4,134.7 62.7,134.4 65.1,134.1 67.4,133.8 69.7,133.5 72.0,133.2 74.3,132.8 76.7,132.5" fill="none" stroke="#c0504d" stroke-width="2"/><circle cx="46.5" cy="136.7" r="3" fill="#ffff00"/><circle cx="58.1" cy="135.1" r="3" fill="#ffff00"/><circle cx="72.0" cy="133.2" r="3" fill="#ffff00"/><text transform="translate(21,116.80000000000001) rotate(-90)" font-size="8.6" fill="#595959" text-anchor="middle" font-family="Liberation Sans">Volume (en milliers de tonnes)</text><path d="M46 197.60000000000002V262M72 197.60000000000002V262" stroke="#d9d9d9"/><text transform="translate(50,202) rotate(-90)" font-size="8" fill="#595959" text-anchor="end" font-family="Liberation Sans">Janvier</text><text transform="translate(61,202) rotate(-90)" font-size="8" fill="#595959" text-anchor="end" font-family="Liberation Sans">Juin</text><text transform="translate(72,202) rotate(-90)" font-size="8" fill="#595959" text-anchor="end" font-family="Liberation Sans">Novembre</text><text x="63" y="255" font-size="8.5" fill="#595959" text-anchor="middle" font-family="Liberation Sans" letter-spacing="0.5">1982</text></svg>
<svg style="left:1581px;top:540px;overflow:hidden" width="77" height="278" viewBox="0 0 77 278"><rect x="0.5" y="0.5" width="82" height="277" fill="#fff" stroke="#d9d9d9"/><path d="M47 210.6H77" stroke="#d9d9d9" stroke-width="1"/><text x="39" y="213.6" font-size="8.5" fill="#595959" text-anchor="end" font-family="Liberation Sans">0</text><path d="M47 185.5H77" stroke="#d9d9d9" stroke-width="1"/><text x="39" y="188.5" font-size="8.5" fill="#595959" text-anchor="end" font-family="Liberation Sans">20</text><path d="M47 160.3H77" stroke="#d9d9d9" stroke-width="1"/><text x="39" y="163.3" font-size="8.5" fill="#595959" text-anchor="end" font-family="Liberation Sans">40</text><path d="M47 135.2H77" stroke="#d9d9d9" stroke-width="1"/><text x="39" y="138.2" font-size="8.5" fill="#595959" text-anchor="end" font-family="Liberation Sans">60</text><path d="M47 110.0H77" stroke="#d9d9d9" stroke-width="1"/><text x="39" y="113.0" font-size="8.5" fill="#595959" text-anchor="end" font-family="Liberation Sans">80</text><path d="M47 84.9H77" stroke="#d9d9d9" stroke-width="1"/><text x="39" y="87.9" font-size="8.5" fill="#595959" text-anchor="end" font-family="Liberation Sans">100</text><path d="M47 59.7H77" stroke="#d9d9d9" stroke-width="1"/><text x="39" y="62.7" font-size="8.5" fill="#595959" text-anchor="end" font-family="Liberation Sans">120</text><path d="M47 34.6H77" stroke="#d9d9d9" stroke-width="1"/><text x="39" y="37.6" font-size="8.5" fill="#595959" text-anchor="end" font-family="Liberation Sans">140</text><polyline points="47.5,145.5 49.8,141.4 52.1,130.6 54.5,137.2 56.8,136.0 59.1,138.8 61.4,142.1 63.7,149.2 66.1,144.1 68.4,137.0 70.7,138.9 73.0,126.5 75.3,143.2 77.7,142.3" fill="none" stroke="#4f81bd" stroke-width="2"/><circle cx="47.5" cy="141.6" r="3" fill="#ffff00"/><circle cx="59.1" cy="140.3" r="3" fill="#ffff00"/><circle cx="73.0" cy="138.8" r="3" fill="#ffff00"/><text transform="translate(22,123) rotate(-90)" font-size="8.6" fill="#595959" text-anchor="middle" font-family="Liberation Sans">Volume (en milliers de tonnes)</text><path d="M47 210.60000000000002V276M73 210.60000000000002V276" stroke="#d9d9d9"/><text transform="translate(51,216) rotate(-90)" font-size="8" fill="#595959" text-anchor="end" font-family="Liberation Sans">Janvier</text><text transform="translate(62,216) rotate(-90)" font-size="8" fill="#595959" text-anchor="end" font-family="Liberation Sans">Juin</text><text transform="translate(73,216) rotate(-90)" font-size="8" fill="#595959" text-anchor="end" font-family="Liberation Sans">Novembre</text><text x="64" y="268.70000000000005" font-size="8.5" fill="#595959" text-anchor="middle" font-family="Liberation Sans" letter-spacing="0.5">1982</text></svg>
<svg style="left:1580px;top:845px;overflow:hidden" width="78" height="116" viewBox="0 0 78 116"><rect x="0.5" y="0.5" width="83" height="115" fill="#fff" stroke="#d9d9d9"/><path d="M48 238.0H78" stroke="#d9d9d9" stroke-width="1"/><text x="40" y="241.0" font-size="8.5" fill="#595959" text-anchor="end" font-family="Liberation Sans">0</text><path d="M48 208.9H78" stroke="#d9d9d9" stroke-width="1"/><text x="40" y="211.9" font-size="8.5" fill="#595959" text-anchor="end" font-family="Liberation Sans">20</text><path d="M48 179.8H78" stroke="#d9d9d9" stroke-width="1"/><text x="40" y="182.8" font-size="8.5" fill="#595959" text-anchor="end" font-family="Liberation Sans">40</text><path d="M48 150.7H78" stroke="#d9d9d9" stroke-width="1"/><text x="40" y="153.7" font-size="8.5" fill="#595959" text-anchor="end" font-family="Liberation Sans">60</text><path d="M48 121.6H78" stroke="#d9d9d9" stroke-width="1"/><text x="40" y="124.6" font-size="8.5" fill="#595959" text-anchor="end" font-family="Liberation Sans">80</text><path d="M48 92.5H78" stroke="#d9d9d9" stroke-width="1"/><text x="40" y="95.5" font-size="8.5" fill="#595959" text-anchor="end" font-family="Liberation Sans">100</text><path d="M48 63.4H78" stroke="#d9d9d9" stroke-width="1"/><text x="40" y="66.4" font-size="8.5" fill="#595959" text-anchor="end" font-family="Liberation Sans">120</text><path d="M48 34.3H78" stroke="#d9d9d9" stroke-width="1"/><text x="40" y="37.3" font-size="8.5" fill="#595959" text-anchor="end" font-family="Liberation Sans">140</text><polyline points="48.5,162.6 50.8,158.0 53.1,145.5 55.5,153.0 57.8,151.7 60.1,154.9 62.4,158.7 64.7,167.0 67.1,161.0 69.4,152.9 71.7,155.1 74.0,140.7 76.3,160.0 78.7,159.0" fill="none" stroke="#4f81bd" stroke-width="2"/><circle cx="48.5" cy="158.1" r="3" fill="#ffff00"/><circle cx="60.1" cy="156.7" r="3" fill="#ffff00"/><circle cx="74.0" cy="154.9" r="3" fill="#ffff00"/></svg>
<div style="left:1580px;top:845px;width:78px;height:115px;overflow:hidden"><svg style="left:0;top:0" width="78" height="115"><text transform="translate(23,114) rotate(-90)" font-size="9.5" fill="#595959" font-family="Liberation Sans" text-anchor="start">de tonnes)</text></svg></div>
<div style="left:0px;top:207px;width:1658px;height:11px;background:#666;"></div>
<div style="left:0px;top:218px;width:19px;height:742px;background:#666;"></div>
<div class="ch" style="left:20px;width:41px">A</div>
<div style="left:19px;top:207px;width:1px;height:11px;background:#bdbdbd;"></div>
<div class="ch" style="left:61px;width:49px">B</div>
<div style="left:60px;top:207px;width:1px;height:11px;background:#bdbdbd;"></div>
<div class="ch" style="left:110px;width:74px">C</div>
<div style="left:109px;top:207px;width:1px;height:11px;background:#bdbdbd;"></div>
<div class="ch" style="left:184px;width:74px">D</div>
<div style="left:183px;top:207px;width:1px;height:11px;background:#bdbdbd;"></div>
<div class="ch" style="left:258px;width:63px">E</div>
<div style="left:257px;top:207px;width:1px;height:11px;background:#bdbdbd;"></div>
<div class="ch" style="left:321px;width:91px">F</div>
<div style="left:320px;top:207px;width:1px;height:11px;background:#bdbdbd;"></div>
<div class="ch" style="left:412px;width:31px">G</div>
<div style="left:411px;top:207px;width:1px;height:11px;background:#bdbdbd;"></div>
<div style="left:443px;top:207px;width:145px;height:10px;background:#262626;"></div>
<div style="left:443px;top:217px;width:145px;height:2px;background:#217346;"></div>
<div class="ch" style="left:443px;width:146px">H</div>
<div style="left:442px;top:207px;width:1px;height:11px;background:#bdbdbd;"></div>
<div class="ch" style="left:589px;width:105px">I</div>
<div style="left:588px;top:207px;width:1px;height:11px;background:#bdbdbd;"></div>
<div class="ch" style="left:694px;width:98px">J</div>
<div style="left:693px;top:207px;width:1px;height:11px;background:#bdbdbd;"></div>
<div class="ch" style="left:792px;width:98px">K</div>
<div style="left:791px;top:207px;width:1px;height:11px;background:#bdbdbd;"></div>
<div class="ch" style="left:890px;width:132px">L</div>
<div style="left:889px;top:207px;width:1px;height:11px;background:#bdbdbd;"></div>
<div class="ch" style="left:1022px;width:86px">M</div>
<div style="left:1021px;top:207px;width:1px;height:11px;background:#bdbdbd;"></div>
<div class="ch" style="left:1108px;width:142px">N</div>
<div style="left:1107px;top:207px;width:1px;height:11px;background:#bdbdbd;"></div>
<div class="ch" style="left:1250px;width:83px">O</div>
<div style="left:1249px;top:207px;width:1px;height:11px;background:#bdbdbd;"></div>
<div class="ch" style="left:1333px;width:144px">P</div>
<div style="left:1332px;top:207px;width:1px;height:11px;background:#bdbdbd;"></div>
<div class="ch" style="left:1477px;width:95px">Q</div>
<div style="left:1476px;top:207px;width:1px;height:11px;background:#bdbdbd;"></div>
<div class="ch" style="left:1572px;width:66px">R</div>
<div style="left:1571px;top:207px;width:1px;height:11px;background:#bdbdbd;"></div>
<svg style="left:11px;top:210px" width="6" height="6"><path d="M5.5 0V5.5H0Z" fill="#c8c8c8"/></svg>
<div style="left:0px;top:218px;width:19px;height:1px;background:#bdbdbd;"></div>
<div class="rh" style="top:221px">1</div>
<div style="left:0px;top:233px;width:19px;height:1px;background:#bdbdbd;"></div>
<div class="rh" style="top:236px">2</div>
<div style="left:0px;top:248px;width:19px;height:1px;background:#bdbdbd;"></div>
<div style="left:0px;top:249px;width:18px;height:14px;background:#262626;"></div>
<div style="left:17px;top:249px;width:2px;height:14px;background:#217346;"></div>
<div class="rh" style="top:251px">3</div>
<div style="left:0px;top:263px;width:19px;height:1px;background:#bdbdbd;"></div>
<div class="rh" style="top:265px">4</div>
<div style="left:0px;top:277px;width:19px;height:1px;background:#bdbdbd;"></div>
<div class="rh" style="top:279px">5</div>
<div style="left:0px;top:291px;width:19px;height:1px;background:#bdbdbd;"></div>
<div class="rh" style="top:293px">6</div>
<div style="left:0px;top:305px;width:19px;height:1px;background:#bdbdbd;"></div>
<div class="rh" style="top:307px">7</div>
<div style="left:0px;top:319px;width:19px;height:1px;background:#bdbdbd;"></div>
<div class="rh" style="top:321px">8</div>
<div style="left:0px;top:333px;width:19px;height:1px;background:#bdbdbd;"></div>
<div class="rh" style="top:335px">9</div>
<div style="left:0px;top:347px;width:19px;height:1px;background:#bdbdbd;"></div>
<div class="rh" style="top:349px">10</div>
<div style="left:0px;top:361px;width:19px;height:1px;background:#bdbdbd;"></div>
<div class="rh" style="top:361px">11</div>
<div style="left:0px;top:373px;width:19px;height:1px;background:#bdbdbd;"></div>
<div class="rh" style="top:373px">12</div>
<div style="left:0px;top:385px;width:19px;height:1px;background:#bdbdbd;"></div>
<div class="rh" style="top:385px">13</div>
<div style="left:0px;top:397px;width:19px;height:1px;background:#bdbdbd;"></div>
<div class="rh" style="top:397px">14</div>
<div style="left:0px;top:409px;width:19px;height:1px;background:#bdbdbd;"></div>
<div class="rh" style="top:412px">15</div>
<div style="left:0px;top:424px;width:19px;height:1px;background:#bdbdbd;"></div>
<div class="rh" style="top:426px">16</div>
<div style="left:0px;top:438px;width:19px;height:1px;background:#bdbdbd;"></div>
<div class="rh" style="top:440px">17</div>
<div style="left:0px;top:452px;width:19px;height:1px;background:#bdbdbd;"></div>
<div class="rh" style="top:454px">18</div>
<div style="left:0px;top:466px;width:19px;height:1px;background:#bdbdbd;"></div>
<div class="rh" style="top:468px">19</div>
<div style="left:0px;top:480px;width:19px;height:1px;background:#bdbdbd;"></div>
<div class="rh" style="top:480px">20</div>
<div style="left:0px;top:492px;width:19px;height:1px;background:#bdbdbd;"></div>
<div class="rh" style="top:492px">21</div>
<div style="left:0px;top:504px;width:19px;height:1px;background:#bdbdbd;"></div>
<div class="rh" style="top:504px">22</div>
<div style="left:0px;top:516px;width:19px;height:1px;background:#bdbdbd;"></div>
<div class="rh" style="top:516px">23</div>
<div style="left:0px;top:528px;width:19px;height:1px;background:#bdbdbd;"></div>
<div class="rh" style="top:529px">24</div>
<div style="left:0px;top:541px;width:19px;height:1px;background:#bdbdbd;"></div>
<div class="rh" style="top:544px">25</div>
<div style="left:0px;top:556px;width:19px;height:1px;background:#bdbdbd;"></div>
<div class="rh" style="top:558px">26</div>
<div style="left:0px;top:570px;width:19px;height:1px;background:#bdbdbd;"></div>
<div class="rh" style="top:572px">27</div>
<div style="left:0px;top:584px;width:19px;height:1px;background:#bdbdbd;"></div>
<div class="rh" style="top:586px">28</div>
<div style="left:0px;top:598px;width:19px;height:1px;background:#bdbdbd;"></div>
<div class="rh" style="top:600px">29</div>
<div style="left:0px;top:612px;width:19px;height:1px;background:#bdbdbd;"></div>
<div class="rh" style="top:614px">30</div>
<div style="left:0px;top:626px;width:19px;height:1px;background:#bdbdbd;"></div>
<div class="rh" style="top:626px">31</div>
<div style="left:0px;top:638px;width:19px;height:1px;background:#bdbdbd;"></div>
<div class="rh" style="top:638px">32</div>
<div style="left:0px;top:650px;width:19px;height:1px;background:#bdbdbd;"></div>
<div class="rh" style="top:650px">33</div>
<div style="left:0px;top:662px;width:19px;height:1px;background:#bdbdbd;"></div>
<div class="rh" style="top:663px">34</div>
<div style="left:0px;top:675px;width:19px;height:1px;background:#bdbdbd;"></div>
<div class="rh" style="top:678px">35</div>
<div style="left:0px;top:690px;width:19px;height:1px;background:#bdbdbd;"></div>
<div class="rh" style="top:692px">36</div>
<div style="left:0px;top:704px;width:19px;height:1px;background:#bdbdbd;"></div>
<div class="rh" style="top:706px">37</div>
<div style="left:0px;top:718px;width:19px;height:1px;background:#bdbdbd;"></div>
<div class="rh" style="top:718px">38</div>
<div style="left:0px;top:730px;width:19px;height:1px;background:#bdbdbd;"></div>
<div class="rh" style="top:730px">39</div>
<div style="left:0px;top:742px;width:19px;height:1px;background:#bdbdbd;"></div>
<div class="rh" style="top:742px">40</div>
<div style="left:0px;top:754px;width:19px;height:1px;background:#bdbdbd;"></div>
<div class="rh" style="top:754px">41</div>
<div style="left:0px;top:766px;width:19px;height:1px;background:#bdbdbd;"></div>
<div class="rh" style="top:766px">42</div>
<div style="left:0px;top:778px;width:19px;height:1px;background:#bdbdbd;"></div>
<div class="rh" style="top:778px">43</div>
<div style="left:0px;top:790px;width:19px;height:1px;background:#bdbdbd;"></div>
<div class="rh" style="top:790px">44</div>
<div style="left:0px;top:802px;width:19px;height:1px;background:#bdbdbd;"></div>
<div class="rh" style="top:802px">45</div>
<div style="left:0px;top:814px;width:19px;height:1px;background:#bdbdbd;"></div>
<div class="rh" style="top:814px">46</div>
<div style="left:0px;top:826px;width:19px;height:1px;background:#bdbdbd;"></div>
<div class="rh" style="top:826px">47</div>
<div style="left:0px;top:838px;width:19px;height:1px;background:#bdbdbd;"></div>
<div class="rh" style="top:839px">48</div>
<div style="left:0px;top:851px;width:19px;height:1px;background:#bdbdbd;"></div>
<div class="rh" style="top:854px">49</div>
<div style="left:0px;top:866px;width:19px;height:1px;background:#bdbdbd;"></div>
<div class="rh" style="top:869px">50</div>
<div style="left:0px;top:881px;width:19px;height:1px;background:#bdbdbd;"></div>
<div class="rh" style="top:883px">51</div>
<div style="left:0px;top:895px;width:19px;height:1px;background:#bdbdbd;"></div>
<div class="rh" style="top:897px">52</div>
<div style="left:0px;top:909px;width:19px;height:1px;background:#bdbdbd;"></div>
<div class="rh" style="top:911px">53</div>
<div style="left:0px;top:923px;width:19px;height:1px;background:#bdbdbd;"></div>
<div class="rh" style="top:925px">54</div>
<div style="left:0px;top:937px;width:19px;height:1px;background:#bdbdbd;"></div>
<div class="rh" style="top:939px">55</div>
<div style="left:0px;top:951px;width:19px;height:1px;background:#bdbdbd;"></div>
<div class="rh" style="top:948px">56</div>
<div style="left:19px;top:218px;width:1px;height:742px;background:#9a9a9a;"></div>
<div style="left:1658px;top:207px;width:19px;height:753px;background:#666;"></div>
<div style="left:1662px;top:209px;width:15px;height:751px;background:#575757;"></div>
<div style="left:1662px;top:209px;width:13px;height:13px;background:#a0a0a0;border:1px solid #4a4a4a"></div>
<svg style="left:1665px;top:213px;" width="9" height="5" viewBox="0 0 9 5"><path d="M0 5L4.5 0L9 5Z" fill="#333"/></svg>
<div style="left:1662px;top:224px;width:15px;height:243px;background:#a6a6a6"></div>
<div style="left:1662px;top:946px;width:13px;height:13px;background:#a0a0a0;border:1px solid #4a4a4a"></div>
<svg style="left:1665px;top:951px;" width="9" height="5" viewBox="0 0 9 5"><path d="M0 0L4.5 5L9 0Z" fill="#333"/></svg>
<div style="left:0px;top:960px;width:1677px;height:28px;background:#666;"></div>
<div style="left:0px;top:960px;width:144px;height:2px;background:#555;"></div>
<div style="left:189px;top:960px;width:1488px;height:2px;background:#555;"></div>
<svg style="left:26px;top:969px;" width="8" height="10" viewBox="0 0 8 10"><path d="M6 1L1 5L6 9Z" fill="#9a9a9a"/></svg>
<svg style="left:54px;top:969px;" width="8" height="10" viewBox="0 0 8 10"><path d="M1 1L6 5L1 9Z" fill="#9a9a9a"/></svg>
<div style="left:100px;top:964px;width:1px;height:20px;background:#8a8a8a;"></div>
<div style="left:102px;top:963px;width:40px;height:22px;background:#fff;"></div>
<div class="t" style="left:111.8px;top:967.1px;font-size:13px;line-height:13px;color:#1a1a1a;">tp1</div>
<div style="left:144px;top:960px;width:45px;height:23px;background:#fff;"></div>
<div style="left:144px;top:983px;width:45px;height:2px;background:#217346;"></div>
<div class="t" style="left:155.6px;top:967.1px;font-size:13px;line-height:13px;color:#1e7145;font-weight:bold;transform:scaleX(1.059);transform-origin:0 0;">tp2</div>
<div class="t" style="left:201.8px;top:967.1px;font-size:13px;line-height:13px;color:#f2f2f2;transform:scaleX(0.987);transform-origin:0 0;">tp2_previsions</div>
<div style="left:300px;top:964px;width:1px;height:20px;background:#8a8a8a;"></div>
<div class="t" style="left:312.7px;top:967.1px;font-size:13px;line-height:13px;color:#f2f2f2;transform:scaleX(0.959);transform-origin:0 0;">tp2_alpha</div>
<div style="left:382px;top:964px;width:1px;height:20px;background:#8a8a8a;"></div>
<svg style="left:415px;top:965px;" width="18" height="18" viewBox="0 0 18 18"><circle cx="9" cy="9" r="7.5" fill="none" stroke="#fff" stroke-width="1.3"/><path d="M9 5V13M5 9H13" stroke="#fff" stroke-width="1.6"/></svg>
<div style="left:658px;top:969px;width:2.5px;height:2.5px;background:#fff;"></div>
<div style="left:658px;top:973.5px;width:2.5px;height:2.5px;background:#fff;"></div>
<div style="left:658px;top:978px;width:2.5px;height:2.5px;background:#fff;"></div>
<div style="left:675px;top:967px;width:983px;height:14px;background:#575757;"></div>
<div style="left:675px;top:967px;width:13px;height:12px;background:#a0a0a0;border:1px solid #4a4a4a"></div>
<svg style="left:679px;top:970px;" width="5" height="8" viewBox="0 0 5 8"><path d="M5 0L0 4L5 8Z" fill="#333"/></svg>
<div style="left:690px;top:968px;width:588px;height:13px;background:#9d9d9d;"></div>
<div style="left:1644px;top:967px;width:13px;height:12px;background:#a0a0a0;border:1px solid #4a4a4a"></div>
<svg style="left:1648px;top:970px;" width="5" height="8" viewBox="0 0 5 8"><path d="M0 0L5 4L0 8Z" fill="#333"/></svg>
<div style="left:0px;top:988px;width:1677px;height:20px;background:#c2bebb;"></div>
<div style="left:0px;top:988px;width:1677px;height:1px;background:#4a4a4a;"></div>
<div class="t" style="left:7.0px;top:992.8px;font-size:12px;line-height:12px;color:#262626;transform:scaleX(0.882);transform-origin:0 0;">Prêt</div>
<svg style="left:45px;top:991px;" width="17" height="15" viewBox="0 0 17 15"><path d="M1.5 1.5H15.5V13.5H1.5ZM1.5 4.5H15.5M4 7H8M4 10H7" fill="none" stroke="#262626" stroke-width="1"/><circle cx="11.5" cy="10" r="2.8" fill="#c2bebb" stroke="#262626"/><circle cx="11.5" cy="10" r="1.2" fill="#262626"/></svg>
<svg style="left:78px;top:990px;" width="17" height="17" viewBox="0 0 17 17"><circle cx="8" cy="3" r="2" fill="none" stroke="#262626"/><path d="M2 6.5L8 7.5L14 6.5M8 7.5V11L4 16M8 11L11 14" fill="none" stroke="#262626" stroke-width="1.1"/><path d="M11 11L16 16M16 11L11 16" stroke="#262626"/></svg>
<div class="t" style="left:97.5px;top:992.8px;font-size:12px;line-height:12px;color:#262626;transform:scaleX(0.953);transform-origin:0 0;">Accessibilité : consultez nos recommandations</div>
<div style="left:1383px;top:989px;width:40px;height:19px;background:#a8a6a4;"></div>
<svg style="left:1395px;top:991px;" width="15" height="15" viewBox="0 0 15 15"><path d="M1.5 1.5H13.5V13.5H1.5ZM1.5 5.5H13.5M1.5 9.5H13.5M5.5 1.5V13.5M9.5 1.5V13.5" fill="none" stroke="#262626" stroke-width="1"/></svg>
<svg style="left:1435px;top:991px;" width="15" height="15" viewBox="0 0 15 15"><path d="M1.5 1.5H13.5V13.5H1.5Z" fill="none" stroke="#262626"/><path d="M4 4.5H11V10.5H4Z" fill="none" stroke="#262626"/><path d="M5 6.5H10M5 8.5H10" stroke="#262626"/></svg>
<svg style="left:1474px;top:991px;" width="16" height="15" viewBox="0 0 16 15"><path d="M1.5 13.5V1.5H14.5V13.5M1.5 9.5H6.5V1.5M9.5 1.5V6.5H14.5" fill="none" stroke="#262626" stroke-width="1"/></svg>
<div style="left:1508.5px;top:998px;width:8px;height:1px;background:#262626;"></div>
<div style="left:1522px;top:998px;width:100px;height:1px;background:#4a4a4a;"></div>
<div style="left:1554px;top:993px;width:5px;height:10px;background:#5a5a5a;"></div>
<div style="left:1572px;top:995px;width:1px;height:7px;background:#4a4a4a;"></div>
<div style="left:1627px;top:998px;width:8px;height:1px;background:#262626;"></div>
<div style="left:1630.5px;top:994.5px;width:1px;height:8px;background:#262626;"></div>
<div class="t" style="left:1648.0px;top:992.8px;font-size:12px;line-height:12px;color:#262626;transform:scaleX(0.867);transform-origin:0 0;">70 %</div>
</body></html>
